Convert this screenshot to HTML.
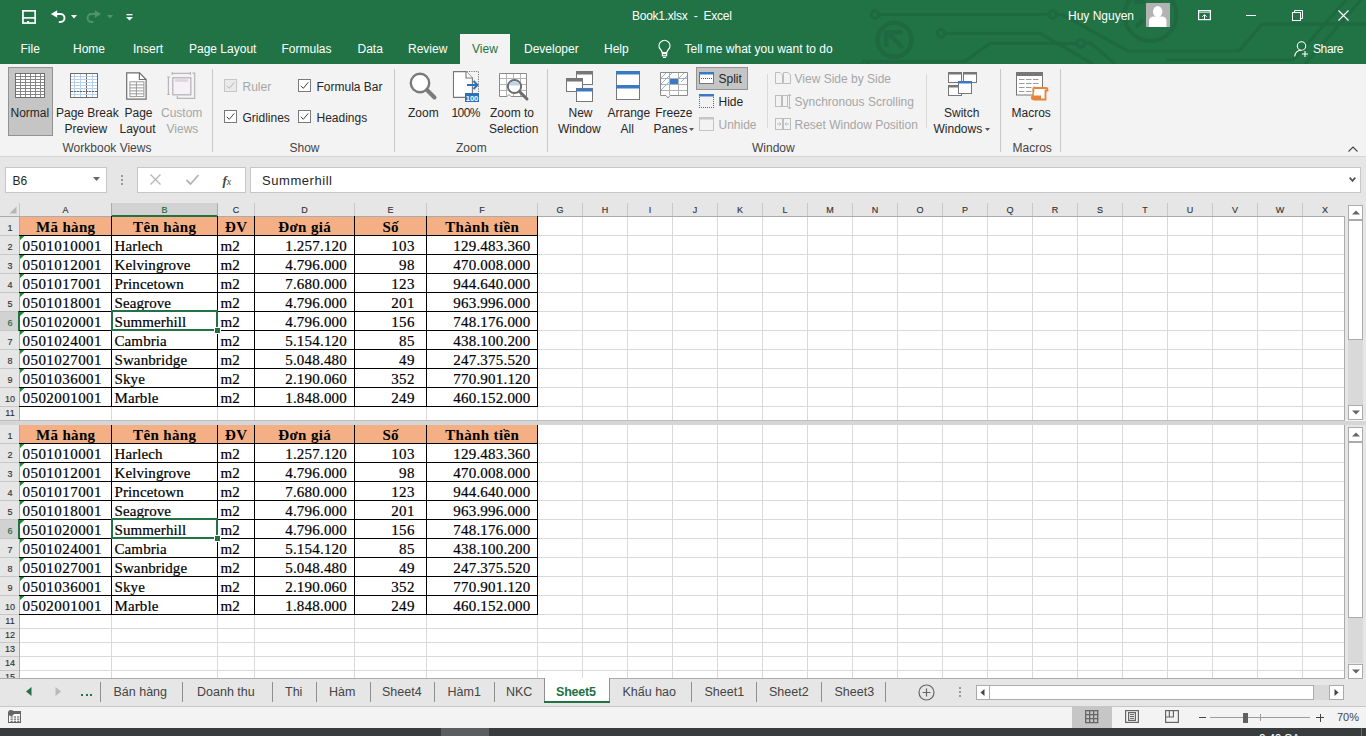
<!DOCTYPE html><html><head><meta charset="utf-8"><title>Book1.xlsx - Excel</title>
<style>
html,body{margin:0;padding:0;width:1366px;height:736px;overflow:hidden;background:#f3f3f3;font-family:"Liberation Sans",sans-serif;position:relative;}
.t{position:absolute;white-space:nowrap;line-height:1;}
svg{position:absolute;overflow:visible;}
</style></head><body>

<div style="position:absolute;left:0px;top:0px;width:1366px;height:64px;background:#217346"></div>
<svg style="left:0px;top:0px" width="1366" height="64" viewBox="0 0 1366 64">
<g stroke="#1e6940" stroke-width="3.2" fill="none">
<path d="M879 14.5 H1049 M1056.5 14.5 H1062 L1128 51 H1239 L1262 24.2 H1366"/>
<circle cx="875" cy="14.5" r="3.8"/><circle cx="1052.7" cy="14.5" r="3.8"/>
<circle cx="894.5" cy="39.8" r="17" stroke-width="4.5"/>
<path d="M903 48 L888 33" stroke-width="4.5"/><path d="M884 30 L902 30 L902 34.5 L888.5 34.5 L888.5 47 L884 47Z" fill="#1e6940" stroke="none"/>
<circle cx="941" cy="33.3" r="3.8"/>
<path d="M944.8 33.3 H1040 L1093 64"/>
<path d="M865 61.4 H965 L990 43.3 H1077 M1084.5 43.3 H1091 L1115 64"/>
<circle cx="1080.7" cy="43.3" r="3.8"/>
<circle cx="865" cy="65" r="3.8"/>
<circle cx="1150.5" cy="15" r="26" stroke-width="4"/><path d="M1134 2 H1145 M1136 27 L1143 20" stroke-width="4"/>
<path d="M1166 60 H1293 L1346 0 M1305 64 L1366 -6"/>
</g></svg>
<svg style="left:21px;top:9px" width="16" height="16" viewBox="0 0 16 16"><rect x="1.95" y="1.85" width="12.2" height="12.2" fill="none" stroke="#ffffff" stroke-width="1.7"/><path d="M1.1 8.9 H15" stroke="#ffffff" stroke-width="1.6"/><rect x="6" y="12" width="2.2" height="2.2" fill="#ffffff"/></svg>
<svg style="left:50px;top:9px" width="16" height="16" viewBox="0 0 16 16"><path d="M0.9 5 L7.2 1.2 L7.2 8.8Z" fill="#ffffff"/><path d="M6.5 5 H10.5 A4 4 0 0 1 10.5 13 H8.8" fill="none" stroke="#ffffff" stroke-width="1.9"/></svg>
<svg style="left:71px;top:15px" width="6" height="4" viewBox="0 0 6 4"><path d="M0 0 L6 0 L3 3.5Z" fill="#ffffff"/></svg>
<svg style="left:87px;top:9px" width="16" height="16" viewBox="0 0 16 16"><path d="M14.1 5 L7.8 1.2 L7.8 8.8Z" fill="#4f9470"/><path d="M8.5 5 H4.5 A4 4 0 0 0 4.5 13 H6.2" fill="none" stroke="#4f9470" stroke-width="1.9"/></svg>
<svg style="left:107px;top:15px" width="6" height="4" viewBox="0 0 6 4"><path d="M0 0 L6 0 L3 3.5Z" fill="#4f9470"/></svg>
<svg style="left:126px;top:14px" width="7" height="7" viewBox="0 0 7 7"><rect x="0.5" y="0" width="6" height="1.3" fill="#ffffff"/><path d="M0 3 L7 3 L3.5 6.5Z" fill="#ffffff"/></svg>
<div class="t" style="left:632px;top:9.84px;font-size:12px;color:#ffffff;font-weight:normal;font-family:'Liberation Sans', sans-serif;letter-spacing:-0.25px;">Book1.xlsx&nbsp; -&nbsp; Excel</div>
<div class="t" style="left:1068px;top:9.84px;font-size:12px;color:#ffffff;font-weight:normal;font-family:'Liberation Sans', sans-serif;">Huy Nguyen</div>
<svg style="left:1146px;top:3px" width="24" height="24" viewBox="0 0 24 24"><rect width="24" height="24" fill="#b3b3b3"/><ellipse cx="11.7" cy="8.6" rx="4.7" ry="5.6" fill="#fff"/><path d="M3 24 L3 18 Q3 13.5 8 13.5 L15.5 13.5 Q20.5 13.5 20.5 18 L20.5 24Z" fill="#fff"/></svg>
<svg style="left:1198px;top:10px" width="14" height="11" viewBox="0 0 14 11"><rect x="0.6" y="0.6" width="11.8" height="9" fill="none" stroke="#ffffff" stroke-width="1.2"/><line x1="0.5" y1="2.2" x2="12.5" y2="2.2" stroke="#ffffff" stroke-width="0.9"/><path d="M6.5 9.6 L6.5 4.8 M4.3 6.8 L6.5 4.6 L8.7 6.8" fill="none" stroke="#ffffff" stroke-width="1"/></svg>
<div style="position:absolute;left:1246px;top:15px;width:10px;height:1px;background:#ffffff"></div>
<svg style="left:1292px;top:10px" width="11" height="11" viewBox="0 0 11 11"><rect x="0.5" y="2.5" width="8" height="8" fill="none" stroke="#ffffff"/><path d="M2.5 2.5 L2.5 0.5 L10.5 0.5 L10.5 8.5 L8.5 8.5" fill="none" stroke="#ffffff"/></svg>
<svg style="left:1338px;top:10px" width="11" height="11" viewBox="0 0 11 11"><path d="M0.5 0.5 L10.5 10.5 M10.5 0.5 L0.5 10.5" stroke="#ffffff" stroke-width="1.2"/></svg>
<div class="t" style="left:20.5px;top:42.84px;font-size:12px;color:#ffffff;font-weight:normal;font-family:'Liberation Sans', sans-serif;">File</div>
<div class="t" style="left:73px;top:42.84px;font-size:12px;color:#ffffff;font-weight:normal;font-family:'Liberation Sans', sans-serif;">Home</div>
<div class="t" style="left:133px;top:42.84px;font-size:12px;color:#ffffff;font-weight:normal;font-family:'Liberation Sans', sans-serif;">Insert</div>
<div class="t" style="left:189px;top:42.84px;font-size:12px;color:#ffffff;font-weight:normal;font-family:'Liberation Sans', sans-serif;">Page Layout</div>
<div class="t" style="left:281.5px;top:42.84px;font-size:12px;color:#ffffff;font-weight:normal;font-family:'Liberation Sans', sans-serif;">Formulas</div>
<div class="t" style="left:357.5px;top:42.84px;font-size:12px;color:#ffffff;font-weight:normal;font-family:'Liberation Sans', sans-serif;">Data</div>
<div class="t" style="left:408px;top:42.84px;font-size:12px;color:#ffffff;font-weight:normal;font-family:'Liberation Sans', sans-serif;">Review</div>
<div class="t" style="left:524px;top:42.84px;font-size:12px;color:#ffffff;font-weight:normal;font-family:'Liberation Sans', sans-serif;">Developer</div>
<div class="t" style="left:604px;top:42.84px;font-size:12px;color:#ffffff;font-weight:normal;font-family:'Liberation Sans', sans-serif;">Help</div>
<div class="t" style="left:684.5px;top:42.84px;font-size:12px;color:#ffffff;font-weight:normal;font-family:'Liberation Sans', sans-serif;">Tell me what you want to do</div>
<div class="t" style="left:1313px;top:42.84px;font-size:12px;color:#ffffff;font-weight:normal;font-family:'Liberation Sans', sans-serif;letter-spacing:-0.4px;">Share</div>
<div style="position:absolute;left:460px;top:34px;width:50px;height:30px;background:#f3f3f3"></div>
<div class="t" style="left:472px;top:42.84px;font-size:12px;color:#217346;font-weight:normal;font-family:'Liberation Sans', sans-serif;">View</div>
<svg style="left:650px;top:37px" width="30" height="26" viewBox="0 0 30 26"><path d="M12.2 15.6 Q11.6 13.6 10.4 12.3 A5.4 5.4 0 1 1 18.6 12.3 Q17.4 13.6 16.8 15.6 Z" fill="none" stroke="#ffffff" stroke-width="1.3"/><rect x="12.4" y="16.6" width="4.2" height="2.2" fill="none" stroke="#ffffff" stroke-width="1.2"/><rect x="13" y="20" width="3" height="1" fill="#ffffff"/></svg>
<svg style="left:1294px;top:41px" width="16" height="16" viewBox="0 0 16 16"><circle cx="7.5" cy="5" r="4.2" fill="none" stroke="#ffffff" stroke-width="1.1"/><path d="M0.7 15.5 Q1.5 9.5 7 9.3" fill="none" stroke="#ffffff" stroke-width="1.1"/><path d="M11 10 L11 16 M8 13 L14 13" stroke="#ffffff" stroke-width="1.1"/></svg>
<div style="position:absolute;left:0px;top:64px;width:1366px;height:92px;background:#f3f3f3"></div>
<div style="position:absolute;left:0px;top:156px;width:1366px;height:1px;background:#d5d5d5"></div>
<div style="position:absolute;left:212px;top:69px;width:1px;height:83px;background:#c8c8c8"></div>
<div style="position:absolute;left:394px;top:69px;width:1px;height:83px;background:#c8c8c8"></div>
<div style="position:absolute;left:547px;top:69px;width:1px;height:83px;background:#c8c8c8"></div>
<div style="position:absolute;left:1000px;top:69px;width:1px;height:83px;background:#c8c8c8"></div>
<div style="position:absolute;left:1060px;top:69px;width:1px;height:83px;background:#c8c8c8"></div>
<div style="position:absolute;left:767px;top:74px;width:1px;height:54px;background:#dadada"></div>
<div style="position:absolute;left:926px;top:74px;width:1px;height:54px;background:#dadada"></div>
<div class="t" style="left:62.5px;top:141.84px;font-size:12px;color:#444;font-weight:normal;font-family:'Liberation Sans', sans-serif;">Workbook Views</div>
<div class="t" style="left:289.5px;top:141.84px;font-size:12px;color:#444;font-weight:normal;font-family:'Liberation Sans', sans-serif;">Show</div>
<div class="t" style="left:456px;top:141.84px;font-size:12px;color:#444;font-weight:normal;font-family:'Liberation Sans', sans-serif;">Zoom</div>
<div class="t" style="left:752px;top:141.84px;font-size:12px;color:#444;font-weight:normal;font-family:'Liberation Sans', sans-serif;">Window</div>
<div class="t" style="left:1012.5px;top:141.84px;font-size:12px;color:#444;font-weight:normal;font-family:'Liberation Sans', sans-serif;">Macros</div>
<div style="position:absolute;left:8px;top:67px;width:43px;height:67px;background:#c5c5c5;border:1px solid #929292"></div>
<svg style="left:15px;top:73px" width="30" height="25" viewBox="0 0 30 25"><rect x="0" y="0" width="30" height="25" fill="#fff"/><rect x="5" y="0" width="1" height="25" fill="#858585"/><rect x="10" y="0" width="1" height="25" fill="#858585"/><rect x="15" y="0" width="1" height="25" fill="#858585"/><rect x="20" y="0" width="1" height="25" fill="#858585"/><rect x="25" y="0" width="1" height="25" fill="#858585"/><rect x="0" y="3" width="30" height="1" fill="#858585"/><rect x="0" y="6" width="30" height="1" fill="#858585"/><rect x="0" y="9" width="30" height="1" fill="#858585"/><rect x="0" y="12" width="30" height="1" fill="#858585"/><rect x="0" y="15" width="30" height="1" fill="#858585"/><rect x="0" y="18" width="30" height="1" fill="#858585"/><rect x="0" y="21" width="30" height="1" fill="#858585"/><rect x="0.5" y="0.5" width="29" height="24" fill="none" stroke="#6d6d6d" stroke-width="1"/></svg>
<div class="t" style="left:10.5px;top:106.84px;font-size:12px;color:#262626;font-weight:normal;font-family:'Liberation Sans', sans-serif;">Normal</div>
<svg style="left:70px;top:73px" width="28" height="25" viewBox="0 0 28 25"><rect x="0" y="0" width="28" height="25" fill="#fff"/><rect x="4" y="0" width="1" height="25" fill="#b9d0ea"/><rect x="10" y="0" width="1" height="25" fill="#b9d0ea"/><rect x="22" y="0" width="1" height="25" fill="#b9d0ea"/><rect x="0" y="3" width="28" height="1" fill="#b9d0ea"/><rect x="0" y="6" width="28" height="1" fill="#b9d0ea"/><rect x="0" y="9" width="28" height="1" fill="#b9d0ea"/><rect x="0" y="12" width="28" height="1" fill="#b9d0ea"/><rect x="0" y="15" width="28" height="1" fill="#b9d0ea"/><rect x="0" y="18" width="28" height="1" fill="#b9d0ea"/><rect x="0" y="21" width="28" height="1" fill="#b9d0ea"/><line x1="16.5" y1="1" x2="16.5" y2="24" stroke="#666" stroke-width="1" stroke-dasharray="2 1"/><line x1="1" y1="18.5" x2="27" y2="18.5" stroke="#666" stroke-width="1" stroke-dasharray="2 1"/><rect x="0.5" y="0.5" width="27" height="24" fill="none" stroke="#6d6d6d" stroke-width="1"/></svg>
<div class="t" style="left:56px;top:106.84px;font-size:12px;color:#262626;font-weight:normal;font-family:'Liberation Sans', sans-serif;">Page Break</div>
<div class="t" style="left:64.5px;top:122.84px;font-size:12px;color:#262626;font-weight:normal;font-family:'Liberation Sans', sans-serif;">Preview</div>
<svg style="left:115px;top:66px" width="90" height="38" viewBox="0 0 90 38"><path d="M11.7 6.8 L24.5 6.8 L31.1 13.5 L31.1 33.1 L11.7 33.1Z" fill="#fff" stroke="#6d6d6d" stroke-width="1.2"/><path d="M24.4 6.8 L24.4 13.5 L31.1 13.5" fill="none" stroke="#6d6d6d" stroke-width="1.2"/><rect x="14.9" y="15.8" width="14" height="14.8" fill="none" stroke="#9a9a9a" stroke-width="1"/><line x1="14.9" y1="18.9" x2="28.9" y2="18.9" stroke="#9a9a9a"/><line x1="14.9" y1="21.9" x2="28.9" y2="21.9" stroke="#9a9a9a"/><line x1="14.9" y1="24.9" x2="28.9" y2="24.9" stroke="#9a9a9a"/><line x1="14.9" y1="27.8" x2="28.9" y2="27.8" stroke="#9a9a9a"/><line x1="21.4" y1="15.8" x2="21.4" y2="30.6" stroke="#9a9a9a"/></svg>
<div class="t" style="left:124.5px;top:106.84px;font-size:12px;color:#262626;font-weight:normal;font-family:'Liberation Sans', sans-serif;">Page</div>
<div class="t" style="left:119.5px;top:122.84px;font-size:12px;color:#262626;font-weight:normal;font-family:'Liberation Sans', sans-serif;">Layout</div>
<svg style="left:115px;top:66px" width="90" height="38" viewBox="0 0 90 38"><rect x="57.8" y="11.8" width="18" height="17" fill="#f6f1f6" stroke="#b9b6b9" stroke-width="1.3"/><rect x="60" y="13.2" width="13" height="2.6" fill="#dcd6dc"/><path d="M57.3 7.4 L75.4 7.4 M57.3 6 L57.3 9 M75.4 6 L75.4 9 M53.4 11.2 L53.4 28.5 M52.2 11.2 L54.7 11.2 M52.2 28.5 L54.7 28.5 M77.4 7.1 L79.7 7.1 L79.7 32.4 L62.3 32.4 L62.3 30" fill="none" stroke="#b9b6b9" stroke-width="1.2"/></svg>
<div class="t" style="left:161px;top:106.84px;font-size:12px;color:#a6a6a6;font-weight:normal;font-family:'Liberation Sans', sans-serif;">Custom</div>
<div class="t" style="left:166.5px;top:122.84px;font-size:12px;color:#a6a6a6;font-weight:normal;font-family:'Liberation Sans', sans-serif;">Views</div>
<svg style="left:224px;top:79px" width="13" height="13" viewBox="0 0 13 13"><rect x="0.5" y="0.5" width="12" height="12" fill="#eaeaea" stroke="#c6c6c6"/><path d="M2.8 6.8 L5.3 9.3 L10.3 3.3" fill="none" stroke="#b8b8b8" stroke-width="1"/></svg>
<div class="t" style="left:242.5px;top:80.84px;font-size:12px;color:#a6a6a6;font-weight:normal;font-family:'Liberation Sans', sans-serif;">Ruler</div>
<svg style="left:298px;top:79px" width="13" height="13" viewBox="0 0 13 13"><rect x="0.5" y="0.5" width="12" height="12" fill="#fff" stroke="#7a7a7a"/><path d="M2.8 6.8 L5.3 9.3 L10.3 3.3" fill="none" stroke="#444" stroke-width="1"/></svg>
<div class="t" style="left:316.5px;top:80.84px;font-size:12px;color:#262626;font-weight:normal;font-family:'Liberation Sans', sans-serif;">Formula Bar</div>
<svg style="left:224px;top:110px" width="13" height="13" viewBox="0 0 13 13"><rect x="0.5" y="0.5" width="12" height="12" fill="#fff" stroke="#7a7a7a"/><path d="M2.8 6.8 L5.3 9.3 L10.3 3.3" fill="none" stroke="#444" stroke-width="1"/></svg>
<div class="t" style="left:242.5px;top:111.84px;font-size:12px;color:#262626;font-weight:normal;font-family:'Liberation Sans', sans-serif;">Gridlines</div>
<svg style="left:298px;top:110px" width="13" height="13" viewBox="0 0 13 13"><rect x="0.5" y="0.5" width="12" height="12" fill="#fff" stroke="#7a7a7a"/><path d="M2.8 6.8 L5.3 9.3 L10.3 3.3" fill="none" stroke="#444" stroke-width="1"/></svg>
<div class="t" style="left:316.5px;top:111.84px;font-size:12px;color:#262626;font-weight:normal;font-family:'Liberation Sans', sans-serif;">Headings</div>
<svg style="left:409px;top:72px" width="29" height="28" viewBox="0 0 29 28"><circle cx="11" cy="11" r="9.2" fill="#fff" stroke="#7a7a7a" stroke-width="2.4"/><line x1="18" y1="18" x2="25.5" y2="25.5" stroke="#7a7a7a" stroke-width="4" stroke-linecap="round"/></svg>
<div class="t" style="left:408px;top:106.84px;font-size:12px;color:#262626;font-weight:normal;font-family:'Liberation Sans', sans-serif;">Zoom</div>
<svg style="left:452px;top:71px" width="28" height="32" viewBox="0 0 28 32"><path d="M1.5 0.6 L14 0.6 L20.4 7 L20.4 26.4 L1.5 26.4Z" fill="#fff" stroke="#777" stroke-width="1.1"/><path d="M14 0.6 L14 7 L20.4 7" fill="#fff" stroke="#777" stroke-width="1.1"/><path d="M14.5 0.5 H26.5 V21" fill="none" stroke="#777" stroke-width="1" stroke-dasharray="1.2 1.2"/><path d="M15 14 H25.5 M21.5 10 L25.5 14 L21.5 18" fill="none" stroke="#2f6fba" stroke-width="2"/><rect x="13" y="22" width="14" height="9" fill="#2f6fba"/><text x="20" y="29.6" font-size="7.5" font-family="Liberation Sans" fill="#fff" text-anchor="middle" font-weight="bold">100</text></svg>
<div class="t" style="left:451.5px;top:106.84px;font-size:12px;color:#262626;font-weight:normal;font-family:'Liberation Sans', sans-serif;letter-spacing:-0.6px;">100%</div>
<svg style="left:499px;top:73px" width="30" height="29" viewBox="0 0 30 29"><path d="M0.5 0.5 H27.5 V23.5 H12 L10 21.5 L8 23.5 H0.5Z" fill="#fff" stroke="#8a8a8a"/><line x1="7.5" y1="1" x2="7.5" y2="23" stroke="#b5b5b5"/><line x1="14.5" y1="1" x2="14.5" y2="23" stroke="#b5b5b5"/><line x1="21.5" y1="1" x2="21.5" y2="23" stroke="#b5b5b5"/><line x1="1" y1="5.5" x2="27" y2="5.5" stroke="#b5b5b5"/><line x1="1" y1="11.5" x2="27" y2="11.5" stroke="#b5b5b5"/><line x1="1" y1="17.5" x2="27" y2="17.5" stroke="#b5b5b5"/><circle cx="15.5" cy="13.5" r="6.6" fill="#fff" stroke="#6d6d6d" stroke-width="2"/><path d="M10.2 12.5 A5.4 5.4 0 0 1 20.8 12.5 Z" fill="#bcd3ec"/><line x1="20.5" y1="18.5" x2="28" y2="26" stroke="#6d6d6d" stroke-width="3" stroke-linecap="round"/></svg>
<div class="t" style="left:490px;top:106.84px;font-size:12px;color:#262626;font-weight:normal;font-family:'Liberation Sans', sans-serif;">Zoom to</div>
<div class="t" style="left:489px;top:122.84px;font-size:12px;color:#262626;font-weight:normal;font-family:'Liberation Sans', sans-serif;">Selection</div>
<svg style="left:566px;top:71px" width="28" height="32" viewBox="0 0 28 32"><rect x="10.5" y="0.5" width="16" height="13" fill="#fff" stroke="#777"/><rect x="10.5" y="0.5" width="16" height="3" fill="#777"/><rect x="0.5" y="7.5" width="16" height="13" fill="#fff" stroke="#777"/><rect x="0.5" y="7.5" width="16" height="3" fill="#777"/><rect x="10.5" y="17.5" width="16" height="13" fill="#fff" stroke="#777"/><rect x="10.5" y="17.5" width="16" height="3" fill="#3b7ac2"/></svg>
<div class="t" style="left:568.5px;top:106.84px;font-size:12px;color:#262626;font-weight:normal;font-family:'Liberation Sans', sans-serif;">New</div>
<div class="t" style="left:558px;top:122.84px;font-size:12px;color:#262626;font-weight:normal;font-family:'Liberation Sans', sans-serif;">Window</div>
<svg style="left:616px;top:71px" width="24" height="29" viewBox="0 0 24 29"><rect x="0.5" y="0.5" width="23" height="28" fill="#fff" stroke="#777"/><rect x="0" y="0" width="24" height="3.5" fill="#3b7ac2"/><rect x="0" y="14" width="24" height="3.5" fill="#3b7ac2"/></svg>
<div class="t" style="left:607.5px;top:106.84px;font-size:12px;color:#262626;font-weight:normal;font-family:'Liberation Sans', sans-serif;">Arrange</div>
<div class="t" style="left:620.5px;top:122.84px;font-size:12px;color:#262626;font-weight:normal;font-family:'Liberation Sans', sans-serif;">All</div>
<svg style="left:660px;top:72px" width="28" height="27" viewBox="0 0 28 27"><path d="M0.5 0.5 L27.5 0.5 L27.5 23.5 L10 23.5 L8 26 L6 23.5 L0.5 23.5Z" fill="#fff" stroke="#8a8a8a"/><line x1="9.5" y1="1" x2="9.5" y2="23" stroke="#b0b0b0"/><line x1="18.5" y1="1" x2="18.5" y2="23" stroke="#b0b0b0"/><line x1="1" y1="6.5" x2="27" y2="6.5" stroke="#b0b0b0"/><line x1="1" y1="12.5" x2="27" y2="12.5" stroke="#b0b0b0"/><line x1="1" y1="18.5" x2="27" y2="18.5" stroke="#b0b0b0"/><rect x="10" y="7" width="8" height="5" fill="#3b7ac2"/><path d="M1 6 L6 1 M1 12 L12 1 M1 18 L9 10 M19 6 L24 1 M21 10 L27 4" stroke="#8fb4de"/></svg>
<div class="t" style="left:655.2px;top:106.84px;font-size:12px;color:#262626;font-weight:normal;font-family:'Liberation Sans', sans-serif;">Freeze</div>
<div class="t" style="left:653.5px;top:122.84px;font-size:12px;color:#262626;font-weight:normal;font-family:'Liberation Sans', sans-serif;">Panes</div>
<svg style="left:689px;top:128px" width="5" height="3" viewBox="0 0 5 3"><path d="M0 0 L5 0 L2.5 3Z" fill="#555"/></svg>
<div style="position:absolute;left:696px;top:67px;width:50px;height:21px;background:#c5c5c5;border:1px solid #929292"></div>
<svg style="left:699px;top:72px" width="15" height="13" viewBox="0 0 15 13"><rect x="0.5" y="0.5" width="14" height="11" fill="#fff" stroke="#777"/><rect x="0" y="0" width="15" height="2.5" fill="#3b7ac2"/><line x1="2" y1="6.5" x2="13" y2="6.5" stroke="#555" stroke-dasharray="1 1"/></svg>
<div class="t" style="left:718.5px;top:72.84px;font-size:12px;color:#262626;font-weight:normal;font-family:'Liberation Sans', sans-serif;">Split</div>
<svg style="left:699px;top:94px" width="15" height="14" viewBox="0 0 15 14"><rect x="0" y="0" width="15" height="2.5" fill="#3b7ac2"/><path d="M0.5 3 V14 M14.5 3 V14 M0 13.5 H15" fill="none" stroke="#666" stroke-dasharray="1 1"/></svg>
<div class="t" style="left:718.5px;top:95.84px;font-size:12px;color:#262626;font-weight:normal;font-family:'Liberation Sans', sans-serif;">Hide</div>
<svg style="left:699px;top:117px" width="15" height="14" viewBox="0 0 15 14"><rect x="0.5" y="0.5" width="14" height="13" fill="none" stroke="#c4c4c4"/><rect x="0" y="0" width="15" height="2.5" fill="#c4c4c4"/></svg>
<div class="t" style="left:718.5px;top:118.84px;font-size:12px;color:#a6a6a6;font-weight:normal;font-family:'Liberation Sans', sans-serif;">Unhide</div>
<svg style="left:775px;top:72px" width="16" height="12" viewBox="0 0 16 12"><path d="M0.5 0.5 L5 0.5 L7.5 3 L7.5 11.5 L0.5 11.5Z M8.5 0.5 L13 0.5 L15.5 3 L15.5 11.5 L8.5 11.5Z" fill="none" stroke="#bdbdbd"/></svg>
<div class="t" style="left:794.5px;top:72.84px;font-size:12px;color:#a6a6a6;font-weight:normal;font-family:'Liberation Sans', sans-serif;">View Side by Side</div>
<svg style="left:775px;top:94px" width="16" height="15" viewBox="0 0 16 15"><rect x="0.5" y="1.5" width="7" height="11" fill="none" stroke="#bdbdbd"/><rect x="6.5" y="1.5" width="6" height="11" fill="none" stroke="#bdbdbd"/><path d="M14.5 0 L14.5 15 M13 2 L14.5 0 L16 2 M13 13 L14.5 15 L16 13" fill="none" stroke="#bdbdbd"/></svg>
<div class="t" style="left:794.5px;top:95.84px;font-size:12px;color:#a6a6a6;font-weight:normal;font-family:'Liberation Sans', sans-serif;">Synchronous Scrolling</div>
<svg style="left:775px;top:118px" width="16" height="12" viewBox="0 0 16 12"><rect x="0.5" y="0.5" width="7" height="11" fill="none" stroke="#bdbdbd"/><rect x="8.5" y="0.5" width="7" height="11" fill="none" stroke="#bdbdbd"/><path d="M2 6 L6 6 M4.5 4.5 L6 6 L4.5 7.5 M14 6 L10 6 M11.5 4.5 L10 6 L11.5 7.5" fill="none" stroke="#bdbdbd"/></svg>
<div class="t" style="left:794.5px;top:118.84px;font-size:12px;color:#a6a6a6;font-weight:normal;font-family:'Liberation Sans', sans-serif;">Reset Window Position</div>
<svg style="left:947.5px;top:72px" width="29" height="25" viewBox="0 0 29 25"><rect x="0.5" y="0.5" width="13" height="10" fill="#fff" stroke="#777"/><rect x="0" y="0" width="14" height="2.5" fill="#777"/><rect x="15.5" y="0.5" width="13" height="10" fill="#fff" stroke="#777"/><rect x="15" y="0" width="14" height="2.5" fill="#777"/><rect x="0.5" y="13.5" width="13" height="10" fill="#fff" stroke="#777"/><rect x="0" y="13" width="14" height="2.5" fill="#777"/><rect x="10.5" y="9.5" width="13" height="12" fill="#fff" stroke="#777"/><rect x="10" y="9" width="14" height="2.5" fill="#3b7ac2"/></svg>
<div class="t" style="left:944px;top:106.84px;font-size:12px;color:#262626;font-weight:normal;font-family:'Liberation Sans', sans-serif;">Switch</div>
<div class="t" style="left:933.5px;top:122.84px;font-size:12px;color:#262626;font-weight:normal;font-family:'Liberation Sans', sans-serif;">Windows</div>
<svg style="left:985px;top:128px" width="5" height="3" viewBox="0 0 5 3"><path d="M0 0 L5 0 L2.5 3Z" fill="#555"/></svg>
<svg style="left:1016px;top:72px" width="32" height="28" viewBox="0 0 32 28"><rect x="0.5" y="0.5" width="26" height="22.5" fill="#fff" stroke="#777"/><rect x="0" y="0" width="27" height="4" fill="#777"/><line x1="3" y1="7.5" x2="8.5" y2="7.5" stroke="#9a9a9a"/><line x1="10" y1="7.5" x2="15.5" y2="7.5" stroke="#9a9a9a"/><line x1="17" y1="7.5" x2="22.5" y2="7.5" stroke="#9a9a9a"/><line x1="3" y1="11.5" x2="8.5" y2="11.5" stroke="#9a9a9a"/><line x1="10" y1="11.5" x2="15.5" y2="11.5" stroke="#9a9a9a"/><line x1="17" y1="11.5" x2="22.5" y2="11.5" stroke="#9a9a9a"/><line x1="3" y1="15.5" x2="8.5" y2="15.5" stroke="#9a9a9a"/><line x1="10" y1="15.5" x2="15.5" y2="15.5" stroke="#9a9a9a"/><line x1="17" y1="15.5" x2="22.5" y2="15.5" stroke="#9a9a9a"/><line x1="3" y1="19.5" x2="8.5" y2="19.5" stroke="#9a9a9a"/><line x1="10" y1="19.5" x2="15.5" y2="19.5" stroke="#9a9a9a"/><line x1="17" y1="19.5" x2="22.5" y2="19.5" stroke="#9a9a9a"/><path d="M18.5 16 L30 16 Q31.5 16 31.5 17.5 L31.5 18.5 L29.5 18.5 L29.5 27.5 L17.5 27.5" fill="#fff" stroke="#e8843a" stroke-width="1.8"/><path d="M19 15.2 Q17 15.2 17 17 L17 24 L24.5 24 L24.5 27.5 L17.5 27.5 Q15.5 27.5 15.5 25.5 Q15.5 24 17 24" fill="#e8843a" stroke="#e8843a" stroke-width="1.2"/></svg>
<div class="t" style="left:1011.5px;top:106.84px;font-size:12px;color:#262626;font-weight:normal;font-family:'Liberation Sans', sans-serif;">Macros</div>
<svg style="left:1028px;top:128px" width="5" height="3" viewBox="0 0 5 3"><path d="M0 0 L5 0 L2.5 3Z" fill="#555"/></svg>
<svg style="left:1348px;top:146px" width="10" height="6" viewBox="0 0 10 6"><path d="M0.5 5.5 L5 1 L9.5 5.5" fill="none" stroke="#444" stroke-width="1.1"/></svg>
<div style="position:absolute;left:0px;top:157px;width:1366px;height:46px;background:#e6e6e6"></div>
<div style="position:absolute;left:5px;top:167px;width:100px;height:24px;background:#fff;border:1px solid #c6c6c6"></div>
<div class="t" style="left:12.5px;top:174.84px;font-size:12px;color:#262626;font-weight:normal;font-family:'Liberation Sans', sans-serif;">B6</div>
<svg style="left:93px;top:177px" width="8" height="4" viewBox="0 0 8 4"><path d="M0 0 L7 0 L3.5 4Z" fill="#666"/></svg>
<div style="position:absolute;left:121px;top:175px;width:2px;height:2px;background:#9a9a9a"></div>
<div style="position:absolute;left:121px;top:179px;width:2px;height:2px;background:#9a9a9a"></div>
<div style="position:absolute;left:121px;top:183px;width:2px;height:2px;background:#9a9a9a"></div>
<div style="position:absolute;left:137px;top:167px;width:107px;height:24px;background:#fff;border:1px solid #c6c6c6"></div>
<svg style="left:150px;top:174px" width="11" height="11" viewBox="0 0 11 11"><path d="M0.5 0.5 L10.5 10.5 M10.5 0.5 L0.5 10.5" stroke="#b4b4b4" stroke-width="1.3"/></svg>
<svg style="left:186px;top:174px" width="13" height="11" viewBox="0 0 13 11"><path d="M0.5 6 L4.5 10 L12.5 1" fill="none" stroke="#b4b4b4" stroke-width="1.8"/></svg>
<div class="t" style="left:222.5px;top:174.11px;font-size:13px;color:#444;font-weight:normal;font-family:'Liberation Serif', serif;"><i><b>f</b><span style="font-size:10px">x</span></i></div>
<div style="position:absolute;left:250px;top:167px;width:1109px;height:24px;background:#fff;border:1px solid #c6c6c6"></div>
<div class="t" style="left:262px;top:174.00px;font-size:13px;color:#262626;font-weight:normal;font-family:'Liberation Sans', sans-serif;letter-spacing:0.55px;">Summerhill</div>
<svg style="left:1349px;top:177px" width="7" height="5" viewBox="0 0 7 5"><path d="M0.7 0.7 L3.5 3.8 L6.3 0.7" fill="none" stroke="#555" stroke-width="1.8"/></svg>
<div style="position:absolute;left:0px;top:203px;width:1345px;height:14px;background:#e6e6e6"></div>
<div style="position:absolute;left:20px;top:217px;width:1325px;height:203px;background:#fff"></div>
<div style="position:absolute;left:0px;top:217px;width:19px;height:203px;background:#e6e6e6"></div>
<div style="position:absolute;left:19px;top:217px;width:1px;height:203px;background:#ababab"></div>
<div style="position:absolute;left:111px;top:217px;width:1px;height:203px;background:#d9d9d9"></div>
<div style="position:absolute;left:217px;top:217px;width:1px;height:203px;background:#d9d9d9"></div>
<div style="position:absolute;left:254px;top:217px;width:1px;height:203px;background:#d9d9d9"></div>
<div style="position:absolute;left:354px;top:217px;width:1px;height:203px;background:#d9d9d9"></div>
<div style="position:absolute;left:426px;top:217px;width:1px;height:203px;background:#d9d9d9"></div>
<div style="position:absolute;left:537px;top:217px;width:1px;height:203px;background:#d9d9d9"></div>
<div style="position:absolute;left:582px;top:217px;width:1px;height:203px;background:#d9d9d9"></div>
<div style="position:absolute;left:627px;top:217px;width:1px;height:203px;background:#d9d9d9"></div>
<div style="position:absolute;left:672px;top:217px;width:1px;height:203px;background:#d9d9d9"></div>
<div style="position:absolute;left:717px;top:217px;width:1px;height:203px;background:#d9d9d9"></div>
<div style="position:absolute;left:762px;top:217px;width:1px;height:203px;background:#d9d9d9"></div>
<div style="position:absolute;left:807px;top:217px;width:1px;height:203px;background:#d9d9d9"></div>
<div style="position:absolute;left:852px;top:217px;width:1px;height:203px;background:#d9d9d9"></div>
<div style="position:absolute;left:897px;top:217px;width:1px;height:203px;background:#d9d9d9"></div>
<div style="position:absolute;left:942px;top:217px;width:1px;height:203px;background:#d9d9d9"></div>
<div style="position:absolute;left:987px;top:217px;width:1px;height:203px;background:#d9d9d9"></div>
<div style="position:absolute;left:1032px;top:217px;width:1px;height:203px;background:#d9d9d9"></div>
<div style="position:absolute;left:1077px;top:217px;width:1px;height:203px;background:#d9d9d9"></div>
<div style="position:absolute;left:1122px;top:217px;width:1px;height:203px;background:#d9d9d9"></div>
<div style="position:absolute;left:1167px;top:217px;width:1px;height:203px;background:#d9d9d9"></div>
<div style="position:absolute;left:1212px;top:217px;width:1px;height:203px;background:#d9d9d9"></div>
<div style="position:absolute;left:1257px;top:217px;width:1px;height:203px;background:#d9d9d9"></div>
<div style="position:absolute;left:1302px;top:217px;width:1px;height:203px;background:#d9d9d9"></div>
<div style="position:absolute;left:20px;top:235px;width:1325px;height:1px;background:#d9d9d9"></div>
<div style="position:absolute;left:0px;top:235px;width:19px;height:1px;background:#c8c8c8"></div>
<div style="position:absolute;left:20px;top:254px;width:1325px;height:1px;background:#d9d9d9"></div>
<div style="position:absolute;left:0px;top:254px;width:19px;height:1px;background:#c8c8c8"></div>
<div style="position:absolute;left:20px;top:273px;width:1325px;height:1px;background:#d9d9d9"></div>
<div style="position:absolute;left:0px;top:273px;width:19px;height:1px;background:#c8c8c8"></div>
<div style="position:absolute;left:20px;top:292px;width:1325px;height:1px;background:#d9d9d9"></div>
<div style="position:absolute;left:0px;top:292px;width:19px;height:1px;background:#c8c8c8"></div>
<div style="position:absolute;left:20px;top:311px;width:1325px;height:1px;background:#d9d9d9"></div>
<div style="position:absolute;left:0px;top:311px;width:19px;height:1px;background:#c8c8c8"></div>
<div style="position:absolute;left:20px;top:330px;width:1325px;height:1px;background:#d9d9d9"></div>
<div style="position:absolute;left:0px;top:330px;width:19px;height:1px;background:#c8c8c8"></div>
<div style="position:absolute;left:20px;top:349px;width:1325px;height:1px;background:#d9d9d9"></div>
<div style="position:absolute;left:0px;top:349px;width:19px;height:1px;background:#c8c8c8"></div>
<div style="position:absolute;left:20px;top:368px;width:1325px;height:1px;background:#d9d9d9"></div>
<div style="position:absolute;left:0px;top:368px;width:19px;height:1px;background:#c8c8c8"></div>
<div style="position:absolute;left:20px;top:387px;width:1325px;height:1px;background:#d9d9d9"></div>
<div style="position:absolute;left:0px;top:387px;width:19px;height:1px;background:#c8c8c8"></div>
<div style="position:absolute;left:20px;top:406px;width:1325px;height:1px;background:#d9d9d9"></div>
<div style="position:absolute;left:0px;top:406px;width:19px;height:1px;background:#c8c8c8"></div>
<div style="position:absolute;left:0px;top:216px;width:1345px;height:1px;background:#ababab"></div>
<div style="position:absolute;left:111px;top:203px;width:1px;height:13px;background:#c8c8c8"></div>
<div style="position:absolute;left:217px;top:203px;width:1px;height:13px;background:#c8c8c8"></div>
<div style="position:absolute;left:254px;top:203px;width:1px;height:13px;background:#c8c8c8"></div>
<div style="position:absolute;left:354px;top:203px;width:1px;height:13px;background:#c8c8c8"></div>
<div style="position:absolute;left:426px;top:203px;width:1px;height:13px;background:#c8c8c8"></div>
<div style="position:absolute;left:537px;top:203px;width:1px;height:13px;background:#c8c8c8"></div>
<div style="position:absolute;left:582px;top:203px;width:1px;height:13px;background:#c8c8c8"></div>
<div style="position:absolute;left:627px;top:203px;width:1px;height:13px;background:#c8c8c8"></div>
<div style="position:absolute;left:672px;top:203px;width:1px;height:13px;background:#c8c8c8"></div>
<div style="position:absolute;left:717px;top:203px;width:1px;height:13px;background:#c8c8c8"></div>
<div style="position:absolute;left:762px;top:203px;width:1px;height:13px;background:#c8c8c8"></div>
<div style="position:absolute;left:807px;top:203px;width:1px;height:13px;background:#c8c8c8"></div>
<div style="position:absolute;left:852px;top:203px;width:1px;height:13px;background:#c8c8c8"></div>
<div style="position:absolute;left:897px;top:203px;width:1px;height:13px;background:#c8c8c8"></div>
<div style="position:absolute;left:942px;top:203px;width:1px;height:13px;background:#c8c8c8"></div>
<div style="position:absolute;left:987px;top:203px;width:1px;height:13px;background:#c8c8c8"></div>
<div style="position:absolute;left:1032px;top:203px;width:1px;height:13px;background:#c8c8c8"></div>
<div style="position:absolute;left:1077px;top:203px;width:1px;height:13px;background:#c8c8c8"></div>
<div style="position:absolute;left:1122px;top:203px;width:1px;height:13px;background:#c8c8c8"></div>
<div style="position:absolute;left:1167px;top:203px;width:1px;height:13px;background:#c8c8c8"></div>
<div style="position:absolute;left:1212px;top:203px;width:1px;height:13px;background:#c8c8c8"></div>
<div style="position:absolute;left:1257px;top:203px;width:1px;height:13px;background:#c8c8c8"></div>
<div style="position:absolute;left:1302px;top:203px;width:1px;height:13px;background:#c8c8c8"></div>
<div style="position:absolute;left:19px;top:203px;width:1px;height:13px;background:#c8c8c8"></div>
<svg style="left:9px;top:206px" width="8" height="8" viewBox="0 0 8 8"><path d="M7.5 0.5 L7.5 7.5 L0.5 7.5Z" fill="#b6b6b6"/></svg>
<div style="position:absolute;left:112px;top:203px;width:105px;height:13px;background:#d2d2d2"></div>
<div style="position:absolute;left:111px;top:203px;width:1px;height:13px;background:#ababab"></div>
<div style="position:absolute;left:217px;top:203px;width:1px;height:13px;background:#ababab"></div>
<div style="position:absolute;left:112px;top:215px;width:105px;height:2px;background:#217346"></div>
<div class="t" style="left:-234.5px;width:600px;text-align:center;top:205.88px;font-size:9px;color:#333;font-weight:normal;font-family:'Liberation Sans', sans-serif;-webkit-text-stroke:0.15px #333;">A</div>
<div class="t" style="left:-135.5px;width:600px;text-align:center;top:205.88px;font-size:9px;color:#1e6b41;font-weight:normal;font-family:'Liberation Sans', sans-serif;-webkit-text-stroke:0.15px #1e6b41;">B</div>
<div class="t" style="left:-64.0px;width:600px;text-align:center;top:205.88px;font-size:9px;color:#333;font-weight:normal;font-family:'Liberation Sans', sans-serif;-webkit-text-stroke:0.15px #333;">C</div>
<div class="t" style="left:4.5px;width:600px;text-align:center;top:205.88px;font-size:9px;color:#333;font-weight:normal;font-family:'Liberation Sans', sans-serif;-webkit-text-stroke:0.15px #333;">D</div>
<div class="t" style="left:90.5px;width:600px;text-align:center;top:205.88px;font-size:9px;color:#333;font-weight:normal;font-family:'Liberation Sans', sans-serif;-webkit-text-stroke:0.15px #333;">E</div>
<div class="t" style="left:182.0px;width:600px;text-align:center;top:205.88px;font-size:9px;color:#333;font-weight:normal;font-family:'Liberation Sans', sans-serif;-webkit-text-stroke:0.15px #333;">F</div>
<div class="t" style="left:260.0px;width:600px;text-align:center;top:205.88px;font-size:9px;color:#333;font-weight:normal;font-family:'Liberation Sans', sans-serif;-webkit-text-stroke:0.15px #333;">G</div>
<div class="t" style="left:305.0px;width:600px;text-align:center;top:205.88px;font-size:9px;color:#333;font-weight:normal;font-family:'Liberation Sans', sans-serif;-webkit-text-stroke:0.15px #333;">H</div>
<div class="t" style="left:350.0px;width:600px;text-align:center;top:205.88px;font-size:9px;color:#333;font-weight:normal;font-family:'Liberation Sans', sans-serif;-webkit-text-stroke:0.15px #333;">I</div>
<div class="t" style="left:395.0px;width:600px;text-align:center;top:205.88px;font-size:9px;color:#333;font-weight:normal;font-family:'Liberation Sans', sans-serif;-webkit-text-stroke:0.15px #333;">J</div>
<div class="t" style="left:440.0px;width:600px;text-align:center;top:205.88px;font-size:9px;color:#333;font-weight:normal;font-family:'Liberation Sans', sans-serif;-webkit-text-stroke:0.15px #333;">K</div>
<div class="t" style="left:485.0px;width:600px;text-align:center;top:205.88px;font-size:9px;color:#333;font-weight:normal;font-family:'Liberation Sans', sans-serif;-webkit-text-stroke:0.15px #333;">L</div>
<div class="t" style="left:530.0px;width:600px;text-align:center;top:205.88px;font-size:9px;color:#333;font-weight:normal;font-family:'Liberation Sans', sans-serif;-webkit-text-stroke:0.15px #333;">M</div>
<div class="t" style="left:575.0px;width:600px;text-align:center;top:205.88px;font-size:9px;color:#333;font-weight:normal;font-family:'Liberation Sans', sans-serif;-webkit-text-stroke:0.15px #333;">N</div>
<div class="t" style="left:620.0px;width:600px;text-align:center;top:205.88px;font-size:9px;color:#333;font-weight:normal;font-family:'Liberation Sans', sans-serif;-webkit-text-stroke:0.15px #333;">O</div>
<div class="t" style="left:665.0px;width:600px;text-align:center;top:205.88px;font-size:9px;color:#333;font-weight:normal;font-family:'Liberation Sans', sans-serif;-webkit-text-stroke:0.15px #333;">P</div>
<div class="t" style="left:710.0px;width:600px;text-align:center;top:205.88px;font-size:9px;color:#333;font-weight:normal;font-family:'Liberation Sans', sans-serif;-webkit-text-stroke:0.15px #333;">Q</div>
<div class="t" style="left:755.0px;width:600px;text-align:center;top:205.88px;font-size:9px;color:#333;font-weight:normal;font-family:'Liberation Sans', sans-serif;-webkit-text-stroke:0.15px #333;">R</div>
<div class="t" style="left:800.0px;width:600px;text-align:center;top:205.88px;font-size:9px;color:#333;font-weight:normal;font-family:'Liberation Sans', sans-serif;-webkit-text-stroke:0.15px #333;">S</div>
<div class="t" style="left:845.0px;width:600px;text-align:center;top:205.88px;font-size:9px;color:#333;font-weight:normal;font-family:'Liberation Sans', sans-serif;-webkit-text-stroke:0.15px #333;">T</div>
<div class="t" style="left:890.0px;width:600px;text-align:center;top:205.88px;font-size:9px;color:#333;font-weight:normal;font-family:'Liberation Sans', sans-serif;-webkit-text-stroke:0.15px #333;">U</div>
<div class="t" style="left:935.0px;width:600px;text-align:center;top:205.88px;font-size:9px;color:#333;font-weight:normal;font-family:'Liberation Sans', sans-serif;-webkit-text-stroke:0.15px #333;">V</div>
<div class="t" style="left:980.0px;width:600px;text-align:center;top:205.88px;font-size:9px;color:#333;font-weight:normal;font-family:'Liberation Sans', sans-serif;-webkit-text-stroke:0.15px #333;">W</div>
<div class="t" style="left:1025.0px;width:600px;text-align:center;top:205.88px;font-size:9px;color:#333;font-weight:normal;font-family:'Liberation Sans', sans-serif;-webkit-text-stroke:0.15px #333;">X</div>
<div style="position:absolute;left:20px;top:425px;width:1325px;height:253px;background:#fff"></div>
<div style="position:absolute;left:0px;top:425px;width:19px;height:253px;background:#e6e6e6"></div>
<div style="position:absolute;left:19px;top:425px;width:1px;height:253px;background:#ababab"></div>
<div style="position:absolute;left:111px;top:425px;width:1px;height:253px;background:#d9d9d9"></div>
<div style="position:absolute;left:217px;top:425px;width:1px;height:253px;background:#d9d9d9"></div>
<div style="position:absolute;left:254px;top:425px;width:1px;height:253px;background:#d9d9d9"></div>
<div style="position:absolute;left:354px;top:425px;width:1px;height:253px;background:#d9d9d9"></div>
<div style="position:absolute;left:426px;top:425px;width:1px;height:253px;background:#d9d9d9"></div>
<div style="position:absolute;left:537px;top:425px;width:1px;height:253px;background:#d9d9d9"></div>
<div style="position:absolute;left:582px;top:425px;width:1px;height:253px;background:#d9d9d9"></div>
<div style="position:absolute;left:627px;top:425px;width:1px;height:253px;background:#d9d9d9"></div>
<div style="position:absolute;left:672px;top:425px;width:1px;height:253px;background:#d9d9d9"></div>
<div style="position:absolute;left:717px;top:425px;width:1px;height:253px;background:#d9d9d9"></div>
<div style="position:absolute;left:762px;top:425px;width:1px;height:253px;background:#d9d9d9"></div>
<div style="position:absolute;left:807px;top:425px;width:1px;height:253px;background:#d9d9d9"></div>
<div style="position:absolute;left:852px;top:425px;width:1px;height:253px;background:#d9d9d9"></div>
<div style="position:absolute;left:897px;top:425px;width:1px;height:253px;background:#d9d9d9"></div>
<div style="position:absolute;left:942px;top:425px;width:1px;height:253px;background:#d9d9d9"></div>
<div style="position:absolute;left:987px;top:425px;width:1px;height:253px;background:#d9d9d9"></div>
<div style="position:absolute;left:1032px;top:425px;width:1px;height:253px;background:#d9d9d9"></div>
<div style="position:absolute;left:1077px;top:425px;width:1px;height:253px;background:#d9d9d9"></div>
<div style="position:absolute;left:1122px;top:425px;width:1px;height:253px;background:#d9d9d9"></div>
<div style="position:absolute;left:1167px;top:425px;width:1px;height:253px;background:#d9d9d9"></div>
<div style="position:absolute;left:1212px;top:425px;width:1px;height:253px;background:#d9d9d9"></div>
<div style="position:absolute;left:1257px;top:425px;width:1px;height:253px;background:#d9d9d9"></div>
<div style="position:absolute;left:1302px;top:425px;width:1px;height:253px;background:#d9d9d9"></div>
<div style="position:absolute;left:20px;top:443px;width:1325px;height:1px;background:#d9d9d9"></div>
<div style="position:absolute;left:0px;top:443px;width:19px;height:1px;background:#c8c8c8"></div>
<div style="position:absolute;left:20px;top:462px;width:1325px;height:1px;background:#d9d9d9"></div>
<div style="position:absolute;left:0px;top:462px;width:19px;height:1px;background:#c8c8c8"></div>
<div style="position:absolute;left:20px;top:481px;width:1325px;height:1px;background:#d9d9d9"></div>
<div style="position:absolute;left:0px;top:481px;width:19px;height:1px;background:#c8c8c8"></div>
<div style="position:absolute;left:20px;top:500px;width:1325px;height:1px;background:#d9d9d9"></div>
<div style="position:absolute;left:0px;top:500px;width:19px;height:1px;background:#c8c8c8"></div>
<div style="position:absolute;left:20px;top:519px;width:1325px;height:1px;background:#d9d9d9"></div>
<div style="position:absolute;left:0px;top:519px;width:19px;height:1px;background:#c8c8c8"></div>
<div style="position:absolute;left:20px;top:538px;width:1325px;height:1px;background:#d9d9d9"></div>
<div style="position:absolute;left:0px;top:538px;width:19px;height:1px;background:#c8c8c8"></div>
<div style="position:absolute;left:20px;top:557px;width:1325px;height:1px;background:#d9d9d9"></div>
<div style="position:absolute;left:0px;top:557px;width:19px;height:1px;background:#c8c8c8"></div>
<div style="position:absolute;left:20px;top:576px;width:1325px;height:1px;background:#d9d9d9"></div>
<div style="position:absolute;left:0px;top:576px;width:19px;height:1px;background:#c8c8c8"></div>
<div style="position:absolute;left:20px;top:595px;width:1325px;height:1px;background:#d9d9d9"></div>
<div style="position:absolute;left:0px;top:595px;width:19px;height:1px;background:#c8c8c8"></div>
<div style="position:absolute;left:20px;top:614px;width:1325px;height:1px;background:#d9d9d9"></div>
<div style="position:absolute;left:0px;top:614px;width:19px;height:1px;background:#c8c8c8"></div>
<div style="position:absolute;left:20px;top:628px;width:1325px;height:1px;background:#d9d9d9"></div>
<div style="position:absolute;left:0px;top:628px;width:19px;height:1px;background:#c8c8c8"></div>
<div style="position:absolute;left:20px;top:642px;width:1325px;height:1px;background:#d9d9d9"></div>
<div style="position:absolute;left:0px;top:642px;width:19px;height:1px;background:#c8c8c8"></div>
<div style="position:absolute;left:20px;top:656px;width:1325px;height:1px;background:#d9d9d9"></div>
<div style="position:absolute;left:0px;top:656px;width:19px;height:1px;background:#c8c8c8"></div>
<div style="position:absolute;left:20px;top:670px;width:1325px;height:1px;background:#d9d9d9"></div>
<div style="position:absolute;left:0px;top:670px;width:19px;height:1px;background:#c8c8c8"></div>
<div style="position:absolute;left:0px;top:312px;width:19px;height:18px;background:#d2d2d2"></div>
<div style="position:absolute;left:18px;top:311px;width:2px;height:20px;background:#217346"></div>
<div style="position:absolute;left:0px;top:520px;width:19px;height:18px;background:#d2d2d2"></div>
<div style="position:absolute;left:18px;top:519px;width:2px;height:20px;background:#217346"></div>
<div style="position:absolute;left:20px;top:217px;width:517px;height:18px;background:#f4b084"></div>
<div style="position:absolute;left:111px;top:216px;width:1px;height:191px;background:#000"></div>
<div style="position:absolute;left:217px;top:216px;width:1px;height:191px;background:#000"></div>
<div style="position:absolute;left:254px;top:216px;width:1px;height:191px;background:#000"></div>
<div style="position:absolute;left:354px;top:216px;width:1px;height:191px;background:#000"></div>
<div style="position:absolute;left:426px;top:216px;width:1px;height:191px;background:#000"></div>
<div style="position:absolute;left:537px;top:216px;width:1px;height:191px;background:#000"></div>
<div style="position:absolute;left:19px;top:235px;width:519px;height:1px;background:#000"></div>
<div style="position:absolute;left:19px;top:254px;width:519px;height:1px;background:#000"></div>
<div style="position:absolute;left:19px;top:273px;width:519px;height:1px;background:#000"></div>
<div style="position:absolute;left:19px;top:292px;width:519px;height:1px;background:#000"></div>
<div style="position:absolute;left:19px;top:311px;width:519px;height:1px;background:#000"></div>
<div style="position:absolute;left:19px;top:330px;width:519px;height:1px;background:#000"></div>
<div style="position:absolute;left:19px;top:349px;width:519px;height:1px;background:#000"></div>
<div style="position:absolute;left:19px;top:368px;width:519px;height:1px;background:#000"></div>
<div style="position:absolute;left:19px;top:387px;width:519px;height:1px;background:#000"></div>
<div style="position:absolute;left:19px;top:406px;width:519px;height:1px;background:#000"></div>
<div class="t" style="left:-234.3px;width:600px;text-align:center;top:220.44px;font-size:15px;color:#000;font-weight:bold;font-family:'Liberation Serif', serif;letter-spacing:0.35px;">Mã hàng</div>
<div class="t" style="left:-135.3px;width:600px;text-align:center;top:220.44px;font-size:15px;color:#000;font-weight:bold;font-family:'Liberation Serif', serif;letter-spacing:0.35px;">Tên hàng</div>
<div class="t" style="left:-63.80000000000001px;width:600px;text-align:center;top:220.44px;font-size:15px;color:#000;font-weight:bold;font-family:'Liberation Serif', serif;letter-spacing:0.35px;">ĐV</div>
<div class="t" style="left:4.699999999999989px;width:600px;text-align:center;top:220.44px;font-size:15px;color:#000;font-weight:bold;font-family:'Liberation Serif', serif;letter-spacing:0.35px;">Đơn giá</div>
<div class="t" style="left:90.69999999999999px;width:600px;text-align:center;top:220.44px;font-size:15px;color:#000;font-weight:bold;font-family:'Liberation Serif', serif;letter-spacing:0.35px;">Số</div>
<div class="t" style="left:182.2px;width:600px;text-align:center;top:220.44px;font-size:15px;color:#000;font-weight:bold;font-family:'Liberation Serif', serif;letter-spacing:0.35px;">Thành tiền</div>
<div class="t" style="left:22.5px;top:238.94px;font-size:15px;color:#000;font-weight:normal;font-family:'Liberation Serif', serif;letter-spacing:0.45px;-webkit-text-stroke:0.2px #000;">0501010001</div>
<div class="t" style="left:114.5px;top:238.94px;font-size:15px;color:#000;font-weight:normal;font-family:'Liberation Serif', serif;letter-spacing:0.1px;-webkit-text-stroke:0.2px #000;">Harlech</div>
<div class="t" style="left:220.5px;top:238.94px;font-size:15px;color:#000;font-weight:normal;font-family:'Liberation Serif', serif;letter-spacing:0.1px;-webkit-text-stroke:0.2px #000;">m2</div>
<div class="t" style="right:1019px;top:238.94px;font-size:15px;color:#000;font-weight:normal;font-family:'Liberation Serif', serif;letter-spacing:0.2px;-webkit-text-stroke:0.2px #000;">1.257.120</div>
<div class="t" style="right:951px;top:238.94px;font-size:15px;color:#000;font-weight:normal;font-family:'Liberation Serif', serif;letter-spacing:0.45px;-webkit-text-stroke:0.2px #000;">103</div>
<div class="t" style="right:835.5px;top:238.94px;font-size:15px;color:#000;font-weight:normal;font-family:'Liberation Serif', serif;letter-spacing:0.2px;-webkit-text-stroke:0.2px #000;">129.483.360</div>
<svg style="left:20px;top:236px" width="4" height="4" viewBox="0 0 4 4"><path d="M0 0 L4.5 0 L0 4Z" fill="#1a8a2e"/></svg>
<div class="t" style="left:22.5px;top:257.94px;font-size:15px;color:#000;font-weight:normal;font-family:'Liberation Serif', serif;letter-spacing:0.45px;-webkit-text-stroke:0.2px #000;">0501012001</div>
<div class="t" style="left:114.5px;top:257.94px;font-size:15px;color:#000;font-weight:normal;font-family:'Liberation Serif', serif;letter-spacing:0.1px;-webkit-text-stroke:0.2px #000;">Kelvingrove</div>
<div class="t" style="left:220.5px;top:257.94px;font-size:15px;color:#000;font-weight:normal;font-family:'Liberation Serif', serif;letter-spacing:0.1px;-webkit-text-stroke:0.2px #000;">m2</div>
<div class="t" style="right:1019px;top:257.94px;font-size:15px;color:#000;font-weight:normal;font-family:'Liberation Serif', serif;letter-spacing:0.2px;-webkit-text-stroke:0.2px #000;">4.796.000</div>
<div class="t" style="right:951px;top:257.94px;font-size:15px;color:#000;font-weight:normal;font-family:'Liberation Serif', serif;letter-spacing:0.45px;-webkit-text-stroke:0.2px #000;">98</div>
<div class="t" style="right:835.5px;top:257.94px;font-size:15px;color:#000;font-weight:normal;font-family:'Liberation Serif', serif;letter-spacing:0.2px;-webkit-text-stroke:0.2px #000;">470.008.000</div>
<svg style="left:20px;top:255px" width="4" height="4" viewBox="0 0 4 4"><path d="M0 0 L4.5 0 L0 4Z" fill="#1a8a2e"/></svg>
<div class="t" style="left:22.5px;top:276.94px;font-size:15px;color:#000;font-weight:normal;font-family:'Liberation Serif', serif;letter-spacing:0.45px;-webkit-text-stroke:0.2px #000;">0501017001</div>
<div class="t" style="left:114.5px;top:276.94px;font-size:15px;color:#000;font-weight:normal;font-family:'Liberation Serif', serif;letter-spacing:0.1px;-webkit-text-stroke:0.2px #000;">Princetown</div>
<div class="t" style="left:220.5px;top:276.94px;font-size:15px;color:#000;font-weight:normal;font-family:'Liberation Serif', serif;letter-spacing:0.1px;-webkit-text-stroke:0.2px #000;">m2</div>
<div class="t" style="right:1019px;top:276.94px;font-size:15px;color:#000;font-weight:normal;font-family:'Liberation Serif', serif;letter-spacing:0.2px;-webkit-text-stroke:0.2px #000;">7.680.000</div>
<div class="t" style="right:951px;top:276.94px;font-size:15px;color:#000;font-weight:normal;font-family:'Liberation Serif', serif;letter-spacing:0.45px;-webkit-text-stroke:0.2px #000;">123</div>
<div class="t" style="right:835.5px;top:276.94px;font-size:15px;color:#000;font-weight:normal;font-family:'Liberation Serif', serif;letter-spacing:0.2px;-webkit-text-stroke:0.2px #000;">944.640.000</div>
<svg style="left:20px;top:274px" width="4" height="4" viewBox="0 0 4 4"><path d="M0 0 L4.5 0 L0 4Z" fill="#1a8a2e"/></svg>
<div class="t" style="left:22.5px;top:295.94px;font-size:15px;color:#000;font-weight:normal;font-family:'Liberation Serif', serif;letter-spacing:0.45px;-webkit-text-stroke:0.2px #000;">0501018001</div>
<div class="t" style="left:114.5px;top:295.94px;font-size:15px;color:#000;font-weight:normal;font-family:'Liberation Serif', serif;letter-spacing:0.1px;-webkit-text-stroke:0.2px #000;">Seagrove</div>
<div class="t" style="left:220.5px;top:295.94px;font-size:15px;color:#000;font-weight:normal;font-family:'Liberation Serif', serif;letter-spacing:0.1px;-webkit-text-stroke:0.2px #000;">m2</div>
<div class="t" style="right:1019px;top:295.94px;font-size:15px;color:#000;font-weight:normal;font-family:'Liberation Serif', serif;letter-spacing:0.2px;-webkit-text-stroke:0.2px #000;">4.796.000</div>
<div class="t" style="right:951px;top:295.94px;font-size:15px;color:#000;font-weight:normal;font-family:'Liberation Serif', serif;letter-spacing:0.45px;-webkit-text-stroke:0.2px #000;">201</div>
<div class="t" style="right:835.5px;top:295.94px;font-size:15px;color:#000;font-weight:normal;font-family:'Liberation Serif', serif;letter-spacing:0.2px;-webkit-text-stroke:0.2px #000;">963.996.000</div>
<svg style="left:20px;top:293px" width="4" height="4" viewBox="0 0 4 4"><path d="M0 0 L4.5 0 L0 4Z" fill="#1a8a2e"/></svg>
<div class="t" style="left:22.5px;top:314.94px;font-size:15px;color:#000;font-weight:normal;font-family:'Liberation Serif', serif;letter-spacing:0.45px;-webkit-text-stroke:0.2px #000;">0501020001</div>
<div class="t" style="left:114.5px;top:314.94px;font-size:15px;color:#000;font-weight:normal;font-family:'Liberation Serif', serif;letter-spacing:0.1px;-webkit-text-stroke:0.2px #000;">Summerhill</div>
<div class="t" style="left:220.5px;top:314.94px;font-size:15px;color:#000;font-weight:normal;font-family:'Liberation Serif', serif;letter-spacing:0.1px;-webkit-text-stroke:0.2px #000;">m2</div>
<div class="t" style="right:1019px;top:314.94px;font-size:15px;color:#000;font-weight:normal;font-family:'Liberation Serif', serif;letter-spacing:0.2px;-webkit-text-stroke:0.2px #000;">4.796.000</div>
<div class="t" style="right:951px;top:314.94px;font-size:15px;color:#000;font-weight:normal;font-family:'Liberation Serif', serif;letter-spacing:0.45px;-webkit-text-stroke:0.2px #000;">156</div>
<div class="t" style="right:835.5px;top:314.94px;font-size:15px;color:#000;font-weight:normal;font-family:'Liberation Serif', serif;letter-spacing:0.2px;-webkit-text-stroke:0.2px #000;">748.176.000</div>
<svg style="left:20px;top:312px" width="4" height="4" viewBox="0 0 4 4"><path d="M0 0 L4.5 0 L0 4Z" fill="#1a8a2e"/></svg>
<div class="t" style="left:22.5px;top:333.94px;font-size:15px;color:#000;font-weight:normal;font-family:'Liberation Serif', serif;letter-spacing:0.45px;-webkit-text-stroke:0.2px #000;">0501024001</div>
<div class="t" style="left:114.5px;top:333.94px;font-size:15px;color:#000;font-weight:normal;font-family:'Liberation Serif', serif;letter-spacing:0.1px;-webkit-text-stroke:0.2px #000;">Cambria</div>
<div class="t" style="left:220.5px;top:333.94px;font-size:15px;color:#000;font-weight:normal;font-family:'Liberation Serif', serif;letter-spacing:0.1px;-webkit-text-stroke:0.2px #000;">m2</div>
<div class="t" style="right:1019px;top:333.94px;font-size:15px;color:#000;font-weight:normal;font-family:'Liberation Serif', serif;letter-spacing:0.2px;-webkit-text-stroke:0.2px #000;">5.154.120</div>
<div class="t" style="right:951px;top:333.94px;font-size:15px;color:#000;font-weight:normal;font-family:'Liberation Serif', serif;letter-spacing:0.45px;-webkit-text-stroke:0.2px #000;">85</div>
<div class="t" style="right:835.5px;top:333.94px;font-size:15px;color:#000;font-weight:normal;font-family:'Liberation Serif', serif;letter-spacing:0.2px;-webkit-text-stroke:0.2px #000;">438.100.200</div>
<svg style="left:20px;top:331px" width="4" height="4" viewBox="0 0 4 4"><path d="M0 0 L4.5 0 L0 4Z" fill="#1a8a2e"/></svg>
<div class="t" style="left:22.5px;top:352.94px;font-size:15px;color:#000;font-weight:normal;font-family:'Liberation Serif', serif;letter-spacing:0.45px;-webkit-text-stroke:0.2px #000;">0501027001</div>
<div class="t" style="left:114.5px;top:352.94px;font-size:15px;color:#000;font-weight:normal;font-family:'Liberation Serif', serif;letter-spacing:0.1px;-webkit-text-stroke:0.2px #000;">Swanbridge</div>
<div class="t" style="left:220.5px;top:352.94px;font-size:15px;color:#000;font-weight:normal;font-family:'Liberation Serif', serif;letter-spacing:0.1px;-webkit-text-stroke:0.2px #000;">m2</div>
<div class="t" style="right:1019px;top:352.94px;font-size:15px;color:#000;font-weight:normal;font-family:'Liberation Serif', serif;letter-spacing:0.2px;-webkit-text-stroke:0.2px #000;">5.048.480</div>
<div class="t" style="right:951px;top:352.94px;font-size:15px;color:#000;font-weight:normal;font-family:'Liberation Serif', serif;letter-spacing:0.45px;-webkit-text-stroke:0.2px #000;">49</div>
<div class="t" style="right:835.5px;top:352.94px;font-size:15px;color:#000;font-weight:normal;font-family:'Liberation Serif', serif;letter-spacing:0.2px;-webkit-text-stroke:0.2px #000;">247.375.520</div>
<svg style="left:20px;top:350px" width="4" height="4" viewBox="0 0 4 4"><path d="M0 0 L4.5 0 L0 4Z" fill="#1a8a2e"/></svg>
<div class="t" style="left:22.5px;top:371.94px;font-size:15px;color:#000;font-weight:normal;font-family:'Liberation Serif', serif;letter-spacing:0.45px;-webkit-text-stroke:0.2px #000;">0501036001</div>
<div class="t" style="left:114.5px;top:371.94px;font-size:15px;color:#000;font-weight:normal;font-family:'Liberation Serif', serif;letter-spacing:0.1px;-webkit-text-stroke:0.2px #000;">Skye</div>
<div class="t" style="left:220.5px;top:371.94px;font-size:15px;color:#000;font-weight:normal;font-family:'Liberation Serif', serif;letter-spacing:0.1px;-webkit-text-stroke:0.2px #000;">m2</div>
<div class="t" style="right:1019px;top:371.94px;font-size:15px;color:#000;font-weight:normal;font-family:'Liberation Serif', serif;letter-spacing:0.2px;-webkit-text-stroke:0.2px #000;">2.190.060</div>
<div class="t" style="right:951px;top:371.94px;font-size:15px;color:#000;font-weight:normal;font-family:'Liberation Serif', serif;letter-spacing:0.45px;-webkit-text-stroke:0.2px #000;">352</div>
<div class="t" style="right:835.5px;top:371.94px;font-size:15px;color:#000;font-weight:normal;font-family:'Liberation Serif', serif;letter-spacing:0.2px;-webkit-text-stroke:0.2px #000;">770.901.120</div>
<svg style="left:20px;top:369px" width="4" height="4" viewBox="0 0 4 4"><path d="M0 0 L4.5 0 L0 4Z" fill="#1a8a2e"/></svg>
<div class="t" style="left:22.5px;top:390.94px;font-size:15px;color:#000;font-weight:normal;font-family:'Liberation Serif', serif;letter-spacing:0.45px;-webkit-text-stroke:0.2px #000;">0502001001</div>
<div class="t" style="left:114.5px;top:390.94px;font-size:15px;color:#000;font-weight:normal;font-family:'Liberation Serif', serif;letter-spacing:0.1px;-webkit-text-stroke:0.2px #000;">Marble</div>
<div class="t" style="left:220.5px;top:390.94px;font-size:15px;color:#000;font-weight:normal;font-family:'Liberation Serif', serif;letter-spacing:0.1px;-webkit-text-stroke:0.2px #000;">m2</div>
<div class="t" style="right:1019px;top:390.94px;font-size:15px;color:#000;font-weight:normal;font-family:'Liberation Serif', serif;letter-spacing:0.2px;-webkit-text-stroke:0.2px #000;">1.848.000</div>
<div class="t" style="right:951px;top:390.94px;font-size:15px;color:#000;font-weight:normal;font-family:'Liberation Serif', serif;letter-spacing:0.45px;-webkit-text-stroke:0.2px #000;">249</div>
<div class="t" style="right:835.5px;top:390.94px;font-size:15px;color:#000;font-weight:normal;font-family:'Liberation Serif', serif;letter-spacing:0.2px;-webkit-text-stroke:0.2px #000;">460.152.000</div>
<svg style="left:20px;top:388px" width="4" height="4" viewBox="0 0 4 4"><path d="M0 0 L4.5 0 L0 4Z" fill="#1a8a2e"/></svg>
<div style="position:absolute;left:111px;top:310px;width:103px;height:17px;border:2px solid #217346"></div>
<div style="position:absolute;left:214px;top:327px;width:5px;height:5px;background:#217346;border:1px solid #fff"></div>
<div style="position:absolute;left:20px;top:425px;width:517px;height:18px;background:#f4b084"></div>
<div style="position:absolute;left:111px;top:424px;width:1px;height:191px;background:#000"></div>
<div style="position:absolute;left:217px;top:424px;width:1px;height:191px;background:#000"></div>
<div style="position:absolute;left:254px;top:424px;width:1px;height:191px;background:#000"></div>
<div style="position:absolute;left:354px;top:424px;width:1px;height:191px;background:#000"></div>
<div style="position:absolute;left:426px;top:424px;width:1px;height:191px;background:#000"></div>
<div style="position:absolute;left:537px;top:424px;width:1px;height:191px;background:#000"></div>
<div style="position:absolute;left:19px;top:443px;width:519px;height:1px;background:#000"></div>
<div style="position:absolute;left:19px;top:462px;width:519px;height:1px;background:#000"></div>
<div style="position:absolute;left:19px;top:481px;width:519px;height:1px;background:#000"></div>
<div style="position:absolute;left:19px;top:500px;width:519px;height:1px;background:#000"></div>
<div style="position:absolute;left:19px;top:519px;width:519px;height:1px;background:#000"></div>
<div style="position:absolute;left:19px;top:538px;width:519px;height:1px;background:#000"></div>
<div style="position:absolute;left:19px;top:557px;width:519px;height:1px;background:#000"></div>
<div style="position:absolute;left:19px;top:576px;width:519px;height:1px;background:#000"></div>
<div style="position:absolute;left:19px;top:595px;width:519px;height:1px;background:#000"></div>
<div style="position:absolute;left:19px;top:614px;width:519px;height:1px;background:#000"></div>
<div class="t" style="left:-234.3px;width:600px;text-align:center;top:428.44px;font-size:15px;color:#000;font-weight:bold;font-family:'Liberation Serif', serif;letter-spacing:0.35px;">Mã hàng</div>
<div class="t" style="left:-135.3px;width:600px;text-align:center;top:428.44px;font-size:15px;color:#000;font-weight:bold;font-family:'Liberation Serif', serif;letter-spacing:0.35px;">Tên hàng</div>
<div class="t" style="left:-63.80000000000001px;width:600px;text-align:center;top:428.44px;font-size:15px;color:#000;font-weight:bold;font-family:'Liberation Serif', serif;letter-spacing:0.35px;">ĐV</div>
<div class="t" style="left:4.699999999999989px;width:600px;text-align:center;top:428.44px;font-size:15px;color:#000;font-weight:bold;font-family:'Liberation Serif', serif;letter-spacing:0.35px;">Đơn giá</div>
<div class="t" style="left:90.69999999999999px;width:600px;text-align:center;top:428.44px;font-size:15px;color:#000;font-weight:bold;font-family:'Liberation Serif', serif;letter-spacing:0.35px;">Số</div>
<div class="t" style="left:182.2px;width:600px;text-align:center;top:428.44px;font-size:15px;color:#000;font-weight:bold;font-family:'Liberation Serif', serif;letter-spacing:0.35px;">Thành tiền</div>
<div class="t" style="left:22.5px;top:446.94px;font-size:15px;color:#000;font-weight:normal;font-family:'Liberation Serif', serif;letter-spacing:0.45px;-webkit-text-stroke:0.2px #000;">0501010001</div>
<div class="t" style="left:114.5px;top:446.94px;font-size:15px;color:#000;font-weight:normal;font-family:'Liberation Serif', serif;letter-spacing:0.1px;-webkit-text-stroke:0.2px #000;">Harlech</div>
<div class="t" style="left:220.5px;top:446.94px;font-size:15px;color:#000;font-weight:normal;font-family:'Liberation Serif', serif;letter-spacing:0.1px;-webkit-text-stroke:0.2px #000;">m2</div>
<div class="t" style="right:1019px;top:446.94px;font-size:15px;color:#000;font-weight:normal;font-family:'Liberation Serif', serif;letter-spacing:0.2px;-webkit-text-stroke:0.2px #000;">1.257.120</div>
<div class="t" style="right:951px;top:446.94px;font-size:15px;color:#000;font-weight:normal;font-family:'Liberation Serif', serif;letter-spacing:0.45px;-webkit-text-stroke:0.2px #000;">103</div>
<div class="t" style="right:835.5px;top:446.94px;font-size:15px;color:#000;font-weight:normal;font-family:'Liberation Serif', serif;letter-spacing:0.2px;-webkit-text-stroke:0.2px #000;">129.483.360</div>
<svg style="left:20px;top:444px" width="4" height="4" viewBox="0 0 4 4"><path d="M0 0 L4.5 0 L0 4Z" fill="#1a8a2e"/></svg>
<div class="t" style="left:22.5px;top:465.94px;font-size:15px;color:#000;font-weight:normal;font-family:'Liberation Serif', serif;letter-spacing:0.45px;-webkit-text-stroke:0.2px #000;">0501012001</div>
<div class="t" style="left:114.5px;top:465.94px;font-size:15px;color:#000;font-weight:normal;font-family:'Liberation Serif', serif;letter-spacing:0.1px;-webkit-text-stroke:0.2px #000;">Kelvingrove</div>
<div class="t" style="left:220.5px;top:465.94px;font-size:15px;color:#000;font-weight:normal;font-family:'Liberation Serif', serif;letter-spacing:0.1px;-webkit-text-stroke:0.2px #000;">m2</div>
<div class="t" style="right:1019px;top:465.94px;font-size:15px;color:#000;font-weight:normal;font-family:'Liberation Serif', serif;letter-spacing:0.2px;-webkit-text-stroke:0.2px #000;">4.796.000</div>
<div class="t" style="right:951px;top:465.94px;font-size:15px;color:#000;font-weight:normal;font-family:'Liberation Serif', serif;letter-spacing:0.45px;-webkit-text-stroke:0.2px #000;">98</div>
<div class="t" style="right:835.5px;top:465.94px;font-size:15px;color:#000;font-weight:normal;font-family:'Liberation Serif', serif;letter-spacing:0.2px;-webkit-text-stroke:0.2px #000;">470.008.000</div>
<svg style="left:20px;top:463px" width="4" height="4" viewBox="0 0 4 4"><path d="M0 0 L4.5 0 L0 4Z" fill="#1a8a2e"/></svg>
<div class="t" style="left:22.5px;top:484.94px;font-size:15px;color:#000;font-weight:normal;font-family:'Liberation Serif', serif;letter-spacing:0.45px;-webkit-text-stroke:0.2px #000;">0501017001</div>
<div class="t" style="left:114.5px;top:484.94px;font-size:15px;color:#000;font-weight:normal;font-family:'Liberation Serif', serif;letter-spacing:0.1px;-webkit-text-stroke:0.2px #000;">Princetown</div>
<div class="t" style="left:220.5px;top:484.94px;font-size:15px;color:#000;font-weight:normal;font-family:'Liberation Serif', serif;letter-spacing:0.1px;-webkit-text-stroke:0.2px #000;">m2</div>
<div class="t" style="right:1019px;top:484.94px;font-size:15px;color:#000;font-weight:normal;font-family:'Liberation Serif', serif;letter-spacing:0.2px;-webkit-text-stroke:0.2px #000;">7.680.000</div>
<div class="t" style="right:951px;top:484.94px;font-size:15px;color:#000;font-weight:normal;font-family:'Liberation Serif', serif;letter-spacing:0.45px;-webkit-text-stroke:0.2px #000;">123</div>
<div class="t" style="right:835.5px;top:484.94px;font-size:15px;color:#000;font-weight:normal;font-family:'Liberation Serif', serif;letter-spacing:0.2px;-webkit-text-stroke:0.2px #000;">944.640.000</div>
<svg style="left:20px;top:482px" width="4" height="4" viewBox="0 0 4 4"><path d="M0 0 L4.5 0 L0 4Z" fill="#1a8a2e"/></svg>
<div class="t" style="left:22.5px;top:503.94px;font-size:15px;color:#000;font-weight:normal;font-family:'Liberation Serif', serif;letter-spacing:0.45px;-webkit-text-stroke:0.2px #000;">0501018001</div>
<div class="t" style="left:114.5px;top:503.94px;font-size:15px;color:#000;font-weight:normal;font-family:'Liberation Serif', serif;letter-spacing:0.1px;-webkit-text-stroke:0.2px #000;">Seagrove</div>
<div class="t" style="left:220.5px;top:503.94px;font-size:15px;color:#000;font-weight:normal;font-family:'Liberation Serif', serif;letter-spacing:0.1px;-webkit-text-stroke:0.2px #000;">m2</div>
<div class="t" style="right:1019px;top:503.94px;font-size:15px;color:#000;font-weight:normal;font-family:'Liberation Serif', serif;letter-spacing:0.2px;-webkit-text-stroke:0.2px #000;">4.796.000</div>
<div class="t" style="right:951px;top:503.94px;font-size:15px;color:#000;font-weight:normal;font-family:'Liberation Serif', serif;letter-spacing:0.45px;-webkit-text-stroke:0.2px #000;">201</div>
<div class="t" style="right:835.5px;top:503.94px;font-size:15px;color:#000;font-weight:normal;font-family:'Liberation Serif', serif;letter-spacing:0.2px;-webkit-text-stroke:0.2px #000;">963.996.000</div>
<svg style="left:20px;top:501px" width="4" height="4" viewBox="0 0 4 4"><path d="M0 0 L4.5 0 L0 4Z" fill="#1a8a2e"/></svg>
<div class="t" style="left:22.5px;top:522.94px;font-size:15px;color:#000;font-weight:normal;font-family:'Liberation Serif', serif;letter-spacing:0.45px;-webkit-text-stroke:0.2px #000;">0501020001</div>
<div class="t" style="left:114.5px;top:522.94px;font-size:15px;color:#000;font-weight:normal;font-family:'Liberation Serif', serif;letter-spacing:0.1px;-webkit-text-stroke:0.2px #000;">Summerhill</div>
<div class="t" style="left:220.5px;top:522.94px;font-size:15px;color:#000;font-weight:normal;font-family:'Liberation Serif', serif;letter-spacing:0.1px;-webkit-text-stroke:0.2px #000;">m2</div>
<div class="t" style="right:1019px;top:522.94px;font-size:15px;color:#000;font-weight:normal;font-family:'Liberation Serif', serif;letter-spacing:0.2px;-webkit-text-stroke:0.2px #000;">4.796.000</div>
<div class="t" style="right:951px;top:522.94px;font-size:15px;color:#000;font-weight:normal;font-family:'Liberation Serif', serif;letter-spacing:0.45px;-webkit-text-stroke:0.2px #000;">156</div>
<div class="t" style="right:835.5px;top:522.94px;font-size:15px;color:#000;font-weight:normal;font-family:'Liberation Serif', serif;letter-spacing:0.2px;-webkit-text-stroke:0.2px #000;">748.176.000</div>
<svg style="left:20px;top:520px" width="4" height="4" viewBox="0 0 4 4"><path d="M0 0 L4.5 0 L0 4Z" fill="#1a8a2e"/></svg>
<div class="t" style="left:22.5px;top:541.94px;font-size:15px;color:#000;font-weight:normal;font-family:'Liberation Serif', serif;letter-spacing:0.45px;-webkit-text-stroke:0.2px #000;">0501024001</div>
<div class="t" style="left:114.5px;top:541.94px;font-size:15px;color:#000;font-weight:normal;font-family:'Liberation Serif', serif;letter-spacing:0.1px;-webkit-text-stroke:0.2px #000;">Cambria</div>
<div class="t" style="left:220.5px;top:541.94px;font-size:15px;color:#000;font-weight:normal;font-family:'Liberation Serif', serif;letter-spacing:0.1px;-webkit-text-stroke:0.2px #000;">m2</div>
<div class="t" style="right:1019px;top:541.94px;font-size:15px;color:#000;font-weight:normal;font-family:'Liberation Serif', serif;letter-spacing:0.2px;-webkit-text-stroke:0.2px #000;">5.154.120</div>
<div class="t" style="right:951px;top:541.94px;font-size:15px;color:#000;font-weight:normal;font-family:'Liberation Serif', serif;letter-spacing:0.45px;-webkit-text-stroke:0.2px #000;">85</div>
<div class="t" style="right:835.5px;top:541.94px;font-size:15px;color:#000;font-weight:normal;font-family:'Liberation Serif', serif;letter-spacing:0.2px;-webkit-text-stroke:0.2px #000;">438.100.200</div>
<svg style="left:20px;top:539px" width="4" height="4" viewBox="0 0 4 4"><path d="M0 0 L4.5 0 L0 4Z" fill="#1a8a2e"/></svg>
<div class="t" style="left:22.5px;top:560.94px;font-size:15px;color:#000;font-weight:normal;font-family:'Liberation Serif', serif;letter-spacing:0.45px;-webkit-text-stroke:0.2px #000;">0501027001</div>
<div class="t" style="left:114.5px;top:560.94px;font-size:15px;color:#000;font-weight:normal;font-family:'Liberation Serif', serif;letter-spacing:0.1px;-webkit-text-stroke:0.2px #000;">Swanbridge</div>
<div class="t" style="left:220.5px;top:560.94px;font-size:15px;color:#000;font-weight:normal;font-family:'Liberation Serif', serif;letter-spacing:0.1px;-webkit-text-stroke:0.2px #000;">m2</div>
<div class="t" style="right:1019px;top:560.94px;font-size:15px;color:#000;font-weight:normal;font-family:'Liberation Serif', serif;letter-spacing:0.2px;-webkit-text-stroke:0.2px #000;">5.048.480</div>
<div class="t" style="right:951px;top:560.94px;font-size:15px;color:#000;font-weight:normal;font-family:'Liberation Serif', serif;letter-spacing:0.45px;-webkit-text-stroke:0.2px #000;">49</div>
<div class="t" style="right:835.5px;top:560.94px;font-size:15px;color:#000;font-weight:normal;font-family:'Liberation Serif', serif;letter-spacing:0.2px;-webkit-text-stroke:0.2px #000;">247.375.520</div>
<svg style="left:20px;top:558px" width="4" height="4" viewBox="0 0 4 4"><path d="M0 0 L4.5 0 L0 4Z" fill="#1a8a2e"/></svg>
<div class="t" style="left:22.5px;top:579.94px;font-size:15px;color:#000;font-weight:normal;font-family:'Liberation Serif', serif;letter-spacing:0.45px;-webkit-text-stroke:0.2px #000;">0501036001</div>
<div class="t" style="left:114.5px;top:579.94px;font-size:15px;color:#000;font-weight:normal;font-family:'Liberation Serif', serif;letter-spacing:0.1px;-webkit-text-stroke:0.2px #000;">Skye</div>
<div class="t" style="left:220.5px;top:579.94px;font-size:15px;color:#000;font-weight:normal;font-family:'Liberation Serif', serif;letter-spacing:0.1px;-webkit-text-stroke:0.2px #000;">m2</div>
<div class="t" style="right:1019px;top:579.94px;font-size:15px;color:#000;font-weight:normal;font-family:'Liberation Serif', serif;letter-spacing:0.2px;-webkit-text-stroke:0.2px #000;">2.190.060</div>
<div class="t" style="right:951px;top:579.94px;font-size:15px;color:#000;font-weight:normal;font-family:'Liberation Serif', serif;letter-spacing:0.45px;-webkit-text-stroke:0.2px #000;">352</div>
<div class="t" style="right:835.5px;top:579.94px;font-size:15px;color:#000;font-weight:normal;font-family:'Liberation Serif', serif;letter-spacing:0.2px;-webkit-text-stroke:0.2px #000;">770.901.120</div>
<svg style="left:20px;top:577px" width="4" height="4" viewBox="0 0 4 4"><path d="M0 0 L4.5 0 L0 4Z" fill="#1a8a2e"/></svg>
<div class="t" style="left:22.5px;top:598.94px;font-size:15px;color:#000;font-weight:normal;font-family:'Liberation Serif', serif;letter-spacing:0.45px;-webkit-text-stroke:0.2px #000;">0502001001</div>
<div class="t" style="left:114.5px;top:598.94px;font-size:15px;color:#000;font-weight:normal;font-family:'Liberation Serif', serif;letter-spacing:0.1px;-webkit-text-stroke:0.2px #000;">Marble</div>
<div class="t" style="left:220.5px;top:598.94px;font-size:15px;color:#000;font-weight:normal;font-family:'Liberation Serif', serif;letter-spacing:0.1px;-webkit-text-stroke:0.2px #000;">m2</div>
<div class="t" style="right:1019px;top:598.94px;font-size:15px;color:#000;font-weight:normal;font-family:'Liberation Serif', serif;letter-spacing:0.2px;-webkit-text-stroke:0.2px #000;">1.848.000</div>
<div class="t" style="right:951px;top:598.94px;font-size:15px;color:#000;font-weight:normal;font-family:'Liberation Serif', serif;letter-spacing:0.45px;-webkit-text-stroke:0.2px #000;">249</div>
<div class="t" style="right:835.5px;top:598.94px;font-size:15px;color:#000;font-weight:normal;font-family:'Liberation Serif', serif;letter-spacing:0.2px;-webkit-text-stroke:0.2px #000;">460.152.000</div>
<svg style="left:20px;top:596px" width="4" height="4" viewBox="0 0 4 4"><path d="M0 0 L4.5 0 L0 4Z" fill="#1a8a2e"/></svg>
<div style="position:absolute;left:111px;top:518px;width:103px;height:17px;border:2px solid #217346"></div>
<div style="position:absolute;left:214px;top:535px;width:5px;height:5px;background:#217346;border:1px solid #fff"></div>
<div class="t" style="left:-290px;width:600px;text-align:center;top:224.38px;font-size:9px;color:#333;font-weight:normal;font-family:'Liberation Sans', sans-serif;-webkit-text-stroke:0.15px #333;">1</div>
<div class="t" style="left:-290px;width:600px;text-align:center;top:243.38px;font-size:9px;color:#333;font-weight:normal;font-family:'Liberation Sans', sans-serif;-webkit-text-stroke:0.15px #333;">2</div>
<div class="t" style="left:-290px;width:600px;text-align:center;top:262.38px;font-size:9px;color:#333;font-weight:normal;font-family:'Liberation Sans', sans-serif;-webkit-text-stroke:0.15px #333;">3</div>
<div class="t" style="left:-290px;width:600px;text-align:center;top:281.38px;font-size:9px;color:#333;font-weight:normal;font-family:'Liberation Sans', sans-serif;-webkit-text-stroke:0.15px #333;">4</div>
<div class="t" style="left:-290px;width:600px;text-align:center;top:300.38px;font-size:9px;color:#333;font-weight:normal;font-family:'Liberation Sans', sans-serif;-webkit-text-stroke:0.15px #333;">5</div>
<div class="t" style="left:-290px;width:600px;text-align:center;top:319.38px;font-size:9px;color:#1e6b41;font-weight:normal;font-family:'Liberation Sans', sans-serif;-webkit-text-stroke:0.15px #1e6b41;">6</div>
<div class="t" style="left:-290px;width:600px;text-align:center;top:338.38px;font-size:9px;color:#333;font-weight:normal;font-family:'Liberation Sans', sans-serif;-webkit-text-stroke:0.15px #333;">7</div>
<div class="t" style="left:-290px;width:600px;text-align:center;top:357.38px;font-size:9px;color:#333;font-weight:normal;font-family:'Liberation Sans', sans-serif;-webkit-text-stroke:0.15px #333;">8</div>
<div class="t" style="left:-290px;width:600px;text-align:center;top:376.38px;font-size:9px;color:#333;font-weight:normal;font-family:'Liberation Sans', sans-serif;-webkit-text-stroke:0.15px #333;">9</div>
<div class="t" style="left:-290px;width:600px;text-align:center;top:395.38px;font-size:9px;color:#333;font-weight:normal;font-family:'Liberation Sans', sans-serif;-webkit-text-stroke:0.15px #333;">10</div>
<div class="t" style="left:-290px;width:600px;text-align:center;top:409.38px;font-size:9px;color:#333;font-weight:normal;font-family:'Liberation Sans', sans-serif;-webkit-text-stroke:0.15px #333;">11</div>
<div class="t" style="left:-290px;width:600px;text-align:center;top:432.38px;font-size:9px;color:#333;font-weight:normal;font-family:'Liberation Sans', sans-serif;-webkit-text-stroke:0.15px #333;">1</div>
<div class="t" style="left:-290px;width:600px;text-align:center;top:451.38px;font-size:9px;color:#333;font-weight:normal;font-family:'Liberation Sans', sans-serif;-webkit-text-stroke:0.15px #333;">2</div>
<div class="t" style="left:-290px;width:600px;text-align:center;top:470.38px;font-size:9px;color:#333;font-weight:normal;font-family:'Liberation Sans', sans-serif;-webkit-text-stroke:0.15px #333;">3</div>
<div class="t" style="left:-290px;width:600px;text-align:center;top:489.38px;font-size:9px;color:#333;font-weight:normal;font-family:'Liberation Sans', sans-serif;-webkit-text-stroke:0.15px #333;">4</div>
<div class="t" style="left:-290px;width:600px;text-align:center;top:508.38px;font-size:9px;color:#333;font-weight:normal;font-family:'Liberation Sans', sans-serif;-webkit-text-stroke:0.15px #333;">5</div>
<div class="t" style="left:-290px;width:600px;text-align:center;top:527.38px;font-size:9px;color:#1e6b41;font-weight:normal;font-family:'Liberation Sans', sans-serif;-webkit-text-stroke:0.15px #1e6b41;">6</div>
<div class="t" style="left:-290px;width:600px;text-align:center;top:546.38px;font-size:9px;color:#333;font-weight:normal;font-family:'Liberation Sans', sans-serif;-webkit-text-stroke:0.15px #333;">7</div>
<div class="t" style="left:-290px;width:600px;text-align:center;top:565.38px;font-size:9px;color:#333;font-weight:normal;font-family:'Liberation Sans', sans-serif;-webkit-text-stroke:0.15px #333;">8</div>
<div class="t" style="left:-290px;width:600px;text-align:center;top:584.38px;font-size:9px;color:#333;font-weight:normal;font-family:'Liberation Sans', sans-serif;-webkit-text-stroke:0.15px #333;">9</div>
<div class="t" style="left:-290px;width:600px;text-align:center;top:603.38px;font-size:9px;color:#333;font-weight:normal;font-family:'Liberation Sans', sans-serif;-webkit-text-stroke:0.15px #333;">10</div>
<div class="t" style="left:-290px;width:600px;text-align:center;top:617.38px;font-size:9px;color:#333;font-weight:normal;font-family:'Liberation Sans', sans-serif;-webkit-text-stroke:0.15px #333;">11</div>
<div class="t" style="left:-290px;width:600px;text-align:center;top:631.38px;font-size:9px;color:#333;font-weight:normal;font-family:'Liberation Sans', sans-serif;-webkit-text-stroke:0.15px #333;">12</div>
<div class="t" style="left:-290px;width:600px;text-align:center;top:645.38px;font-size:9px;color:#333;font-weight:normal;font-family:'Liberation Sans', sans-serif;-webkit-text-stroke:0.15px #333;">13</div>
<div class="t" style="left:-290px;width:600px;text-align:center;top:659.38px;font-size:9px;color:#333;font-weight:normal;font-family:'Liberation Sans', sans-serif;-webkit-text-stroke:0.15px #333;">14</div>
<div class="t" style="left:-290px;width:600px;text-align:center;top:673.38px;font-size:9px;color:#333;font-weight:normal;font-family:'Liberation Sans', sans-serif;-webkit-text-stroke:0.15px #333;">15</div>
<div style="position:absolute;left:0px;top:678px;width:1345px;height:1px;background:#ababab"></div>
<div style="position:absolute;left:1345px;top:203px;width:21px;height:217px;background:#e6e6e6"></div>
<div style="position:absolute;left:1344px;top:216px;width:1px;height:204px;background:#ababab"></div>
<div style="position:absolute;left:1348px;top:205px;width:15px;height:15px;background:#fff;border:1px solid #ababab;box-sizing:border-box"></div>
<div style="position:absolute;left:1348px;top:220px;width:15px;height:185px;background:#d9d9d9"></div>
<svg style="left:1351.5px;top:210px" width="8" height="5" viewBox="0 0 8 5"><path d="M0 4.5 L4 0.5 L8 4.5Z" fill="#666"/></svg>
<div style="position:absolute;left:1348px;top:220px;width:15px;height:120px;background:#fff;border:1px solid #ababab;box-sizing:border-box"></div>
<div style="position:absolute;left:1348px;top:405px;width:15px;height:15px;background:#fff;border:1px solid #ababab;box-sizing:border-box"></div>
<svg style="left:1351.5px;top:410px" width="8" height="5" viewBox="0 0 8 5"><path d="M0 0.5 L8 0.5 L4 4.5Z" fill="#666"/></svg>
<div style="position:absolute;left:1345px;top:425px;width:21px;height:253px;background:#e6e6e6"></div>
<div style="position:absolute;left:1344px;top:425px;width:1px;height:253px;background:#ababab"></div>
<div style="position:absolute;left:1348px;top:427px;width:15px;height:15px;background:#fff;border:1px solid #ababab;box-sizing:border-box"></div>
<div style="position:absolute;left:1348px;top:442px;width:15px;height:221px;background:#d9d9d9"></div>
<svg style="left:1351.5px;top:432px" width="8" height="5" viewBox="0 0 8 5"><path d="M0 4.5 L4 0.5 L8 4.5Z" fill="#666"/></svg>
<div style="position:absolute;left:1348px;top:442px;width:15px;height:176px;background:#fff;border:1px solid #ababab;box-sizing:border-box"></div>
<div style="position:absolute;left:1348px;top:664px;width:15px;height:15px;background:#fff;border:1px solid #ababab;box-sizing:border-box"></div>
<svg style="left:1351.5px;top:669px" width="8" height="5" viewBox="0 0 8 5"><path d="M0 0.5 L8 0.5 L4 4.5Z" fill="#666"/></svg>
<div style="position:absolute;left:0px;top:420px;width:1345px;height:1px;background:#bdbdbd"></div>
<div style="position:absolute;left:0px;top:421px;width:1366px;height:4px;background:#d6d6d6"></div>
<div style="position:absolute;left:0px;top:679px;width:1366px;height:27px;background:#e6e6e6"></div>
<div style="position:absolute;left:0px;top:706px;width:1366px;height:1px;background:#c6c6c6"></div>
<svg style="left:26px;top:687px" width="6" height="9" viewBox="0 0 6 9"><path d="M5.5 0 L5.5 9 L0 4.5Z" fill="#217346"/></svg>
<svg style="left:55px;top:687px" width="6" height="9" viewBox="0 0 6 9"><path d="M0.5 0 L0.5 9 L6 4.5Z" fill="#b9b9b9"/></svg>
<div style="position:absolute;left:81px;top:694px;width:2px;height:2px;background:#217346"></div>
<div style="position:absolute;left:85.5px;top:694px;width:2px;height:2px;background:#217346"></div>
<div style="position:absolute;left:90px;top:694px;width:2px;height:2px;background:#217346"></div>
<div style="position:absolute;left:100px;top:682px;width:1px;height:20px;background:#8f8f8f"></div>
<div style="position:absolute;left:182px;top:682px;width:1px;height:20px;background:#8f8f8f"></div>
<div style="position:absolute;left:272px;top:682px;width:1px;height:20px;background:#8f8f8f"></div>
<div style="position:absolute;left:316px;top:682px;width:1px;height:20px;background:#8f8f8f"></div>
<div style="position:absolute;left:370px;top:682px;width:1px;height:20px;background:#8f8f8f"></div>
<div style="position:absolute;left:434px;top:682px;width:1px;height:20px;background:#8f8f8f"></div>
<div style="position:absolute;left:494px;top:682px;width:1px;height:20px;background:#8f8f8f"></div>
<div class="t" style="left:113.5px;top:686.12px;font-size:12.5px;color:#444;font-weight:normal;font-family:'Liberation Sans', sans-serif;">Bán hàng</div>
<div class="t" style="left:197px;top:686.12px;font-size:12.5px;color:#444;font-weight:normal;font-family:'Liberation Sans', sans-serif;">Doanh thu</div>
<div class="t" style="left:285px;top:686.12px;font-size:12.5px;color:#444;font-weight:normal;font-family:'Liberation Sans', sans-serif;">Thi</div>
<div class="t" style="left:329px;top:686.12px;font-size:12.5px;color:#444;font-weight:normal;font-family:'Liberation Sans', sans-serif;">Hàm</div>
<div class="t" style="left:382px;top:686.12px;font-size:12.5px;color:#444;font-weight:normal;font-family:'Liberation Sans', sans-serif;">Sheet4</div>
<div class="t" style="left:447.5px;top:686.12px;font-size:12.5px;color:#444;font-weight:normal;font-family:'Liberation Sans', sans-serif;">Hàm1</div>
<div class="t" style="left:506px;top:686.12px;font-size:12.5px;color:#444;font-weight:normal;font-family:'Liberation Sans', sans-serif;">NKC</div>
<div style="position:absolute;left:544px;top:678px;width:66px;height:25px;background:#fff;border-left:1px solid #8f8f8f;border-right:1px solid #8f8f8f;box-sizing:border-box"></div>
<div style="position:absolute;left:544px;top:701px;width:66px;height:2px;background:#217346"></div>
<div class="t" style="left:556px;top:686.12px;font-size:12.5px;color:#217346;font-weight:bold;font-family:'Liberation Sans', sans-serif;letter-spacing:-0.2px;">Sheet5</div>
<div class="t" style="left:622.5px;top:686.12px;font-size:12.5px;color:#444;font-weight:normal;font-family:'Liberation Sans', sans-serif;">Khấu hao</div>
<div class="t" style="left:704.5px;top:686.12px;font-size:12.5px;color:#444;font-weight:normal;font-family:'Liberation Sans', sans-serif;">Sheet1</div>
<div class="t" style="left:769px;top:686.12px;font-size:12.5px;color:#444;font-weight:normal;font-family:'Liberation Sans', sans-serif;">Sheet2</div>
<div class="t" style="left:834.5px;top:686.12px;font-size:12.5px;color:#444;font-weight:normal;font-family:'Liberation Sans', sans-serif;">Sheet3</div>
<div style="position:absolute;left:691px;top:682px;width:1px;height:20px;background:#8f8f8f"></div>
<div style="position:absolute;left:756px;top:682px;width:1px;height:20px;background:#8f8f8f"></div>
<div style="position:absolute;left:821px;top:682px;width:1px;height:20px;background:#8f8f8f"></div>
<div style="position:absolute;left:885px;top:682px;width:1px;height:20px;background:#8f8f8f"></div>
<svg style="left:918px;top:684px" width="17" height="17" viewBox="0 0 17 17"><circle cx="8.5" cy="8.5" r="7.5" fill="none" stroke="#666" stroke-width="1.2"/><path d="M8.5 4.5 L8.5 12.5 M4.5 8.5 L12.5 8.5" stroke="#666" stroke-width="1.2"/></svg>
<div style="position:absolute;left:959px;top:687px;width:1.5px;height:1.5px;background:#999"></div>
<div style="position:absolute;left:959px;top:691px;width:1.5px;height:1.5px;background:#999"></div>
<div style="position:absolute;left:959px;top:695px;width:1.5px;height:1.5px;background:#999"></div>
<div style="position:absolute;left:976px;top:685px;width:14px;height:15px;background:#fff;border:1px solid #ababab;box-sizing:border-box"></div>
<svg style="left:980px;top:689px" width="5" height="7" viewBox="0 0 5 7"><path d="M4.5 0 L4.5 7 L0.5 3.5Z" fill="#444"/></svg>
<div style="position:absolute;left:990px;top:685px;width:339px;height:15px;background:#d9d9d9"></div>
<div style="position:absolute;left:989px;top:685px;width:325px;height:15px;background:#fff;border:1px solid #ababab;box-sizing:border-box"></div>
<div style="position:absolute;left:1329px;top:685px;width:15px;height:15px;background:#fff;border:1px solid #ababab;box-sizing:border-box"></div>
<svg style="left:1334px;top:689px" width="5" height="7" viewBox="0 0 5 7"><path d="M0.5 0 L0.5 7 L4.5 3.5Z" fill="#444"/></svg>
<div style="position:absolute;left:0px;top:707px;width:1366px;height:21px;background:#f3f3f3"></div>
<svg style="left:8px;top:710px" width="14" height="14" viewBox="0 0 14 14"><rect x="0.5" y="3.5" width="12" height="9" fill="#fff" stroke="#666"/><rect x="5" y="1" width="8" height="2.8" fill="#666"/><circle cx="3" cy="3" r="3" fill="#666"/><rect x="2.5" y="6.3" width="2.3" height="1.3" fill="#777"/><rect x="2.5" y="8.5" width="2.3" height="1.3" fill="#777"/><rect x="2.5" y="10.7" width="2.3" height="1.3" fill="#777"/><rect x="5.8" y="6.3" width="2.3" height="1.3" fill="#777"/><rect x="5.8" y="8.5" width="2.3" height="1.3" fill="#777"/><rect x="5.8" y="10.7" width="2.3" height="1.3" fill="#777"/><rect x="9.1" y="6.3" width="2.3" height="1.3" fill="#777"/><rect x="9.1" y="8.5" width="2.3" height="1.3" fill="#777"/><rect x="9.1" y="10.7" width="2.3" height="1.3" fill="#777"/></svg>
<div style="position:absolute;left:1072px;top:707px;width:40px;height:21px;background:#c6c6c6"></div>
<svg style="left:1085px;top:710px" width="14" height="14" viewBox="0 0 14 14"><rect x="0" y="0" width="1.3" height="13" fill="#666"/><rect x="4" y="0" width="1.3" height="13" fill="#666"/><rect x="8" y="0" width="1.3" height="13" fill="#666"/><rect x="12" y="0" width="1.3" height="13" fill="#666"/><rect x="0" y="0" width="13.3" height="1.3" fill="#666"/><rect x="0" y="4" width="13.3" height="1.3" fill="#666"/><rect x="0" y="8" width="13.3" height="1.3" fill="#666"/><rect x="0" y="12" width="13.3" height="1.3" fill="#666"/></svg>
<svg style="left:1125px;top:710px" width="14" height="13" viewBox="0 0 14 13"><rect x="0.6" y="0.6" width="12.8" height="11.8" fill="none" stroke="#666" stroke-width="1.2"/><rect x="3.6" y="2.6" width="6.8" height="7.8" fill="none" stroke="#666" stroke-width="1.2"/><path d="M5 4.6 H9 M5 6.5 H9 M5 8.4 H9" stroke="#666" stroke-width="1"/></svg>
<svg style="left:1165px;top:710px" width="14" height="13" viewBox="0 0 14 13"><rect x="0.6" y="0.6" width="12.8" height="11.8" fill="none" stroke="#666" stroke-width="1.2"/><path d="M0.6 7 H8.4 V0.6 M4.4 0.6 V7" fill="none" stroke="#666" stroke-width="1.2"/></svg>
<div style="position:absolute;left:1199px;top:717px;width:7px;height:1px;background:#444"></div>
<div style="position:absolute;left:1210px;top:717px;width:100px;height:1px;background:#9c9c9c"></div>
<div style="position:absolute;left:1260px;top:714px;width:1px;height:7px;background:#9c9c9c"></div>
<div style="position:absolute;left:1243px;top:713px;width:5px;height:10px;background:#606060"></div>
<div style="position:absolute;left:1316px;top:717px;width:8px;height:1px;background:#444"></div>
<div style="position:absolute;left:1319.5px;top:713.5px;width:1px;height:8px;background:#444"></div>
<div class="t" style="left:1337px;top:711.69px;font-size:11px;color:#444;font-weight:normal;font-family:'Liberation Sans', sans-serif;">70%</div>
<div style="position:absolute;left:0px;top:728px;width:1366px;height:8px;background:#383c3c"></div>
<div style="position:absolute;left:441px;top:728px;width:48px;height:8px;background:#5b5e5e"></div>
<div class="t" style="left:1259px;top:732.84px;font-size:12px;color:#fff;font-weight:normal;font-family:'Liberation Sans', sans-serif;letter-spacing:-0.3px;">9:40 SA</div>
<div style="position:absolute;left:1361px;top:728px;width:1px;height:8px;background:#6a6d6d"></div>
</body></html>
